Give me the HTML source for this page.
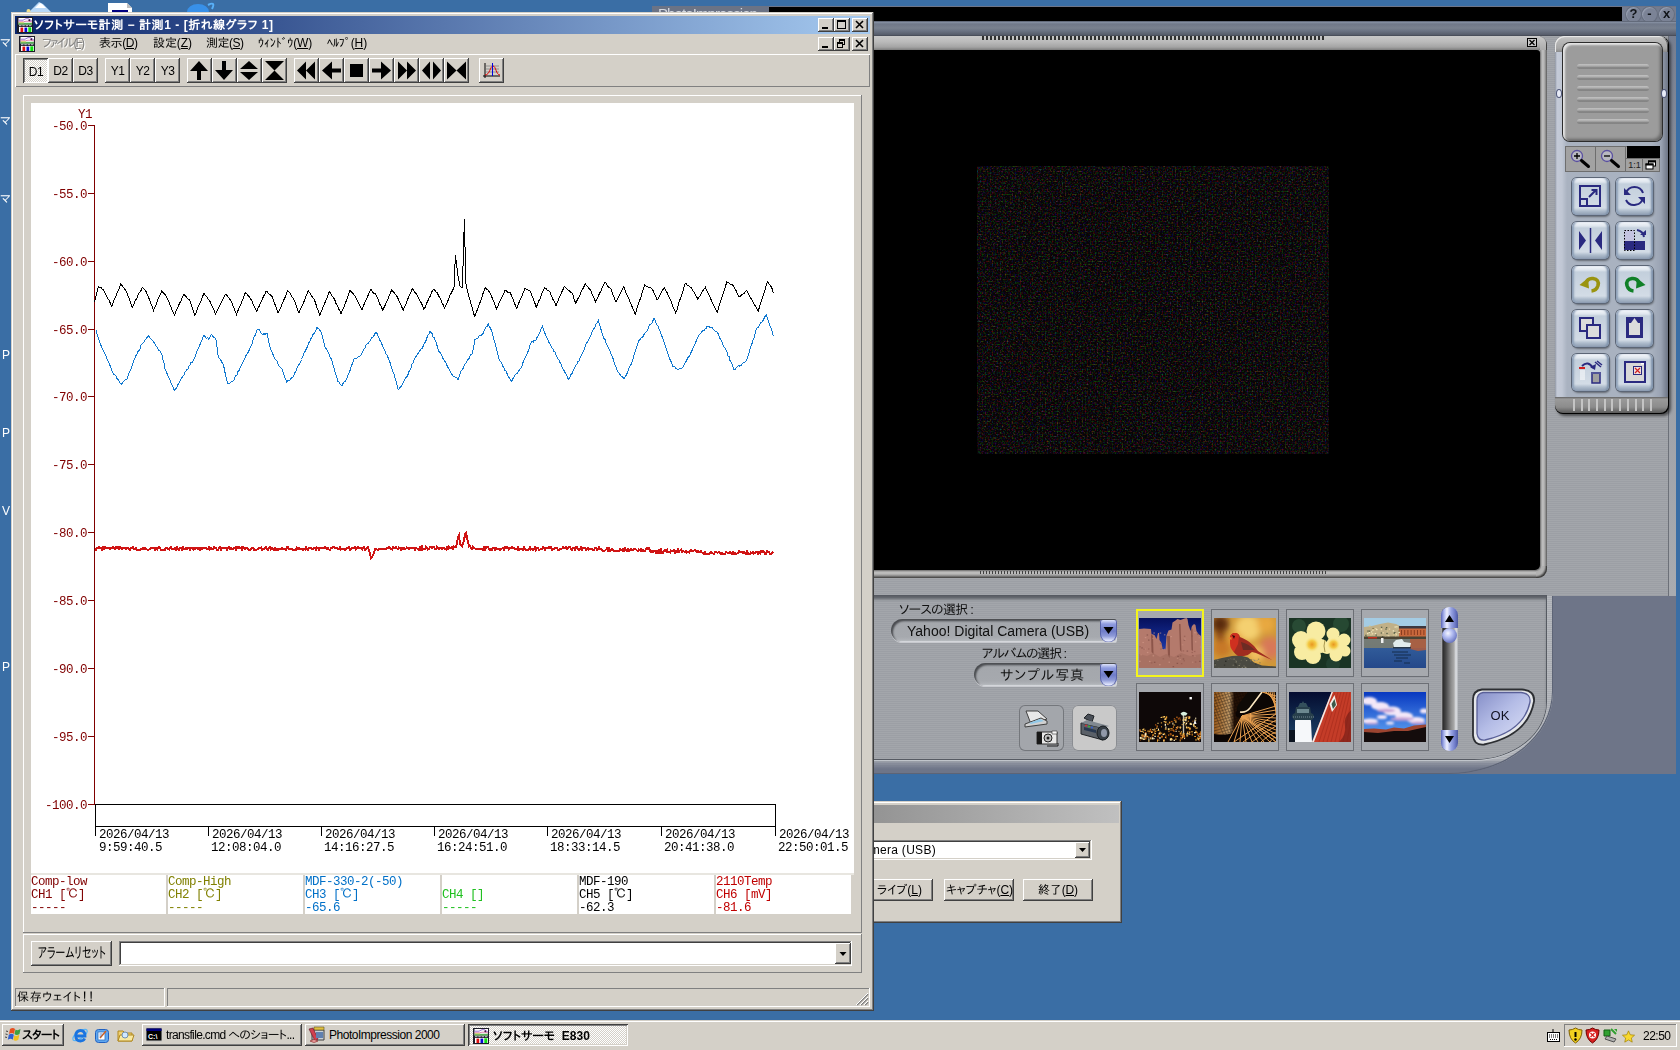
<!DOCTYPE html>
<html lang="ja"><head><meta charset="utf-8"><title>desktop</title>
<style>*{box-sizing:border-box;margin:0;padding:0}
html,body{width:1680px;height:1050px;overflow:hidden}
body{background:#3a6ea5;position:relative;font-family:"Liberation Sans","IPAGothic","Noto Sans CJK JP",sans-serif;font-size:12px;color:#000}
.a{position:absolute}
.ui{font-family:"Liberation Sans","IPAPGothic","IPAGothic","Noto Sans CJK JP",sans-serif;font-size:12px;line-height:14px;white-space:nowrap}
.mono{font-family:"Liberation Mono","IPAGothic",monospace;font-size:12.5px;letter-spacing:-0.5px;line-height:13px;white-space:pre}
.win{background:#d4d0c8;box-shadow:inset -1px -1px #404040,inset 1px 1px #d4d0c8,inset -2px -2px #808080,inset 2px 2px #fff}
.btn{background:#d4d0c8;box-shadow:inset -1px -1px #404040,inset 1px 1px #fff,inset -2px -2px #808080,inset 2px 2px #d4d0c8}
.btnp{background:#d4d0c8;box-shadow:inset -1px -1px #fff,inset 1px 1px #404040,inset -2px -2px #d4d0c8,inset 2px 2px #808080}
.sunk{box-shadow:inset -1px -1px #fff,inset 1px 1px #808080,inset -2px -2px #d4d0c8,inset 2px 2px #404040}
.sunk1{box-shadow:inset -1px -1px #fff,inset 1px 1px #808080}
.rais1{box-shadow:inset -1px -1px #808080,inset 1px 1px #fff}
.tb{background:#d4d0c8;box-shadow:inset -1px -1px #404040,inset 1px 1px #fff,inset -2px -2px #808080;width:25px;height:25px;top:58px}
.tb svg{position:absolute;left:0;top:0}
u{text-decoration:underline}
</style></head>
<body>
<!-- s_desktop -->
<svg class="a" style="left:26px;top:0" width="30" height="12"><path d="M3 12l10-10 4 2 8 8z" fill="#b8d8f8"/><path d="M9 8l5-5 2 1 4 4z" fill="#fff"/><circle cx="2.500" cy="11" r="2" fill="#f0e090"/></svg>
<svg class="a" style="left:106px;top:0" width="30" height="12"><path d="M2 3h19l5 5v4h-24z" fill="#fff"/><path d="M21 3v5h5z" fill="#c0c0c0"/><rect x="6" y="10" width="16" height="2" fill="#000080"/></svg>
<svg class="a" style="left:182px;top:0" width="36" height="12"><ellipse cx="16" cy="12" rx="11" ry="8" fill="#3890e8"/><path d="M26 5q8-4 4 4" stroke="#58b0f8" stroke-width="2" fill="none"/></svg>
<div class="a ui" style="left:0px;top:36px;color:#fff">マ</div>
<div class="a ui" style="left:0px;top:114px;color:#fff">マ</div>
<div class="a ui" style="left:0px;top:192px;color:#fff">マ</div>
<div class="a ui" style="left:2px;top:348px;color:#fff">P</div>
<div class="a ui" style="left:2px;top:426px;color:#fff">P</div>
<div class="a ui" style="left:2px;top:504px;color:#fff">V</div>
<div class="a ui" style="left:2px;top:660px;color:#fff">P</div>
<!-- s_photo -->
<div class="a" style="left:652px;top:6px;width:1024px;height:768px;background:#6e7588"></div>
<div class="a" style="left:652px;top:6px;width:117px;height:15px;background:#6b7385"></div>
<div class="a a" style="left:658px;top:5px;font-size:15px;line-height:17px;color:#d4d8e0;letter-spacing:-0.90px">PhotoImpression</div>
<div class="a" style="left:769px;top:7px;width:853px;height:14px;background:#000"></div>
<div class="a" style="left:1622px;top:7px;width:54px;height:14px;background:#747c8f"></div>
<div class="a" style="left:1625px;top:6px;width:17px;height:17px;border-radius:50%;background:#7b8396;border:1px solid #59607099;box-shadow:inset 1px 1px 1px #99a1b3"></div>
<div class="a" style="left:1625px;top:5px;width:17px;text-align:center;font:bold 13px/17px 'Liberation Sans',sans-serif;color:#101418">?</div>
<div class="a" style="left:1641px;top:6px;width:17px;height:17px;border-radius:50%;background:#7b8396;border:1px solid #59607099;box-shadow:inset 1px 1px 1px #99a1b3"></div>
<div class="a" style="left:1641px;top:5px;width:17px;text-align:center;font:bold 13px/17px 'Liberation Sans',sans-serif;color:#101418">-</div>
<div class="a" style="left:1658px;top:6px;width:17px;height:17px;border-radius:50%;background:#7b8396;border:1px solid #59607099;box-shadow:inset 1px 1px 1px #99a1b3"></div>
<div class="a" style="left:1658px;top:5px;width:17px;text-align:center;font:bold 13px/17px 'Liberation Sans',sans-serif;color:#101418">x</div>
<div class="a" style="left:652px;top:21px;width:1024px;height:15px;background:linear-gradient(180deg,#3c4250 0,#8993a6 1px,#707889 3px,#79818f 7px,#6a7282 10px,#555b69 14px,#3e424c 15px)"></div>
<div class="a" style="left:874px;top:36px;width:794px;height:560px;background:repeating-linear-gradient(180deg,#a3a6ab 0 1px,#9c9fa5 1px 2px)"></div>
<div class="a" style="left:1668px;top:36px;width:8px;height:560px;background:linear-gradient(180deg,#767e90 0,#858c9a 120px,#9da1a8 330px,#a8abb0 560px);box-shadow:inset 1px 0 #6c7078"></div>
<div class="a" style="left:860px;top:36px;width:687px;height:542px;border-radius:9px;background:#b2b2b2;box-shadow:inset -1px -1px 1px #3c3c3c,inset -2px -2px 2px #6e6e6e,inset -5px -5px 2px -3px #c8c8c8"></div>
<div class="a" style="left:860px;top:36px;width:680px;height:14px;background:linear-gradient(180deg,#c8c8c8 0,#bababa 6px,#a4a4a4 11px,#7e7e7e 14px)"></div>
<div class="a" style="left:1540px;top:37px;width:6px;height:13px;border-top-right-radius:8px;background:linear-gradient(180deg,#c8c8c8 0,#bababa 6px,#acacac 13px)"></div>
<div class="a" style="left:1540px;top:50px;width:7px;height:516px;background:linear-gradient(90deg,#8a8a8a 0,#b6b6b6 2px,#c2c2c2 3px,#a2a2a2 5px,#5a5a5a 7px)"></div>
<div class="a" style="left:860px;top:570px;width:676px;height:8px;background:linear-gradient(180deg,#8a8a8a 0,#b6b6b6 2px,#c2c2c2 3px,#a2a2a2 5px,#606060 7px,#3c3c3c 8px)"></div>
<div class="a" style="left:860px;top:50px;width:680px;height:520px;background:#000;border-bottom-right-radius:5px;border-top-right-radius:3px;box-shadow:1px 1px 1px #7a7a7a"></div>
<div class="a" style="left:982px;top:36px;width:344px;height:4px;background:repeating-linear-gradient(90deg,#303030 0 2px,transparent 2px 4px)"></div>
<div class="a" style="left:980px;top:571px;width:346px;height:3px;background:repeating-linear-gradient(90deg,#404040 0 1px,transparent 1px 3px)"></div>
<svg class="a" style="left:1527px;top:38px" width="10" height="9"><rect x=".500" y=".500" width="9" height="8" fill="#c8c8c8" stroke="#000"/><path d="M2.500 2l5 5M7.500 2l-5 5" stroke="#000" stroke-width="1.300"/></svg>
<svg class="a" style="left:977px;top:166px" width="352" height="288"><defs><filter id="nz" x="0" y="0" width="100%" height="100%" color-interpolation-filters="sRGB"><feTurbulence type="fractalNoise" baseFrequency="0.6" numOctaves="1" seed="3"/><feColorMatrix type="matrix" values="1.1 0 0 0 -0.565  0 0.95 0 0 -0.48  0 0 1.0 0 -0.52  0 0 0 0 1"/></filter></defs><rect width="352" height="288" fill="#070406"/><rect width="352" height="288" filter="url(#nz)" style="mix-blend-mode:screen"/></svg>
<div class="a" style="left:1555px;top:36px;width:114px;height:378px;border-radius:9px 9px 8px 8px;background:#000;box-shadow:2px 2px 3px #0008"></div>
<div class="a" style="left:1555px;top:36px;width:113px;height:362px;border-radius:9px 9px 0 0;background:linear-gradient(90deg,#8f96a3 0,#c4cad7 2px,#c0c7d4 7px,#a9b2c0 12px,#a9b2c0 96px,#9aa3b3 106px,#6d7585 113px)"></div>
<div class="a" style="left:1555px;top:36px;width:113px;height:16px;border-radius:9px 9px 0 0;background:linear-gradient(180deg,#d0d0d0 0,#bcbcbc 3px,#a8a8a8 12px,#8a8a8a 16px);box-shadow:inset 1px 1px #e8e8e8,inset -1px 0 #505050"></div>
<div class="a" style="left:1555px;top:397px;width:113px;height:16px;border-radius:0 0 8px 8px;background:linear-gradient(180deg,#606060 0,#9a9a9a 2px,#8c8c8c 10px,#5a5a5a 16px)"></div>
<div class="a" style="left:1573px;top:399px;width:79px;height:12px;background:repeating-linear-gradient(90deg,#c4c4c4 0 2px,transparent 2px 7.700px)"></div>
<div class="a" style="left:1563px;top:43px;width:99px;height:98px;border-radius:7px;background:#9c9c9c;box-shadow:inset 2px 2px 2px #e6e6e6,inset -2px -2px 3px #686868,0 0 0 1px #2c2c2c"></div>
<div class="a" style="left:1577px;top:64px;width:72px;height:5px;border-radius:3px;background:linear-gradient(180deg,#c2c2c2 0,#adadad 2px,#7b7b7b 4px,#8e8e8e 5px)"></div>
<div class="a" style="left:1577px;top:75px;width:72px;height:5px;border-radius:3px;background:linear-gradient(180deg,#c2c2c2 0,#adadad 2px,#7b7b7b 4px,#8e8e8e 5px)"></div>
<div class="a" style="left:1577px;top:86px;width:72px;height:5px;border-radius:3px;background:linear-gradient(180deg,#c2c2c2 0,#adadad 2px,#7b7b7b 4px,#8e8e8e 5px)"></div>
<div class="a" style="left:1577px;top:97px;width:72px;height:5px;border-radius:3px;background:linear-gradient(180deg,#c2c2c2 0,#adadad 2px,#7b7b7b 4px,#8e8e8e 5px)"></div>
<div class="a" style="left:1577px;top:108px;width:72px;height:5px;border-radius:3px;background:linear-gradient(180deg,#c2c2c2 0,#adadad 2px,#7b7b7b 4px,#8e8e8e 5px)"></div>
<div class="a" style="left:1577px;top:119px;width:72px;height:5px;border-radius:3px;background:linear-gradient(180deg,#c2c2c2 0,#adadad 2px,#7b7b7b 4px,#8e8e8e 5px)"></div>
<div class="a" style="left:1557px;top:90px;width:4px;height:7px;border-radius:50%;background:#e8ecf8;box-shadow:0 0 0 1px #50587a"></div>
<div class="a" style="left:1662px;top:90px;width:4px;height:7px;border-radius:50%;background:#e8ecf8;box-shadow:0 0 0 1px #50587a"></div>
<div class="a" style="left:1565px;top:146px;width:95px;height:26px;background:#a2a2a2;box-shadow:inset 0 0 0 1px #6e6e6e"></div>
<div class="a" style="left:1595px;top:146px;width:1px;height:26px;background:#6e6e6e"></div><div class="a" style="left:1625px;top:146px;width:1px;height:26px;background:#6e6e6e"></div>
<div class="a" style="left:1627px;top:146px;width:33px;height:12px;background:#000"></div>
<div class="a" style="left:1626px;top:158px;width:34px;height:1px;background:#6e6e6e"></div><div class="a" style="left:1642px;top:158px;width:1px;height:14px;background:#6e6e6e"></div>
<div class="a" style="left:1627px;top:159px;width:15px;text-align:center;font:9px/12px 'Liberation Sans',sans-serif;color:#202020">1:1</div>
<svg class="a" style="left:1645px;top:160px" width="12" height="10"><rect x="3.500" y="1" width="7" height="5" fill="#fff" stroke="#000"/><rect x="3" y="0.500" width="8" height="2" fill="#000"/><rect x="1" y="4" width="7" height="5" fill="#fff" stroke="#000"/><rect x=".500" y="3.500" width="8" height="2" fill="#000"/></svg>
<svg class="a" style="left:1569px;top:148px" width="24" height="22" viewBox="0 0 24 22"><circle cx="8" cy="8" r="5.500" fill="#b8b8c0" stroke="#5a50a0" stroke-width="1.300"/><path d="M5 8h6M8 5v6" stroke="#000" stroke-width="1.300"/><path d="M12.500 12.500l7 6" stroke="#000" stroke-width="3" stroke-linecap="round"/></svg>
<svg class="a" style="left:1599px;top:148px" width="24" height="22" viewBox="0 0 24 22"><circle cx="8" cy="8" r="5.500" fill="#b8b8c0" stroke="#5a50a0" stroke-width="1.300"/><path d="M5 8h6" stroke="#000" stroke-width="1.300"/><path d="M12.500 12.500l7 6" stroke="#000" stroke-width="3" stroke-linecap="round"/></svg>
<div class="a" style="left:1572px;top:178px;width:37px;height:37px;border-radius:5px;background:linear-gradient(180deg,#f4f7fb 0,#dfe6ee 4px,#c3cfdc 6px,#d3dce6 30px,#aebccc 33px,#8d9cb0 37px);box-shadow:inset 3px 0 2px -1px #8ea0b8,inset -3px 0 2px -1px #7f92ab,0 0 0 1px #5c6676,1px 2px 2px #0006"><svg width="37" height="37" viewBox="0 0 37 37"><rect x="8" y="8" width="20" height="20" fill="none" stroke="#2a2a80" stroke-width="2"/><rect x="8" y="21" width="7" height="7" fill="none" stroke="#2a2a80" stroke-width="2"/><path d="M17 19l7-7M19.500 12h5v5" fill="none" stroke="#2a2a80" stroke-width="2"/></svg></div>
<div class="a" style="left:1616px;top:178px;width:37px;height:37px;border-radius:5px;background:linear-gradient(180deg,#f4f7fb 0,#dfe6ee 4px,#c3cfdc 6px,#d3dce6 30px,#aebccc 33px,#8d9cb0 37px);box-shadow:inset 3px 0 2px -1px #8ea0b8,inset -3px 0 2px -1px #7f92ab,0 0 0 1px #5c6676,1px 2px 2px #0006"><svg width="37" height="37" viewBox="0 0 37 37"><path d="M10 22a9 9 0 0 0 17-3M27 15a9 9 0 0 0-17 0" fill="none" stroke="#2a2a80" stroke-width="2"/><path d="M8 10v7h7zM29 26v-7h-7z" fill="#2a2a80"/></svg></div>
<div class="a" style="left:1572px;top:222px;width:37px;height:37px;border-radius:5px;background:linear-gradient(180deg,#f4f7fb 0,#dfe6ee 4px,#c3cfdc 6px,#d3dce6 30px,#aebccc 33px,#8d9cb0 37px);box-shadow:inset 3px 0 2px -1px #8ea0b8,inset -3px 0 2px -1px #7f92ab,0 0 0 1px #5c6676,1px 2px 2px #0006"><svg width="37" height="37" viewBox="0 0 37 37"><path d="M18.500 6v25" stroke="#2a2a80" stroke-width="1.500"/><path d="M7 9l7 9.500-7 9.500zM30 9l-7 9.500 7 9.500z" fill="#2a2a80"/></svg></div>
<div class="a" style="left:1616px;top:222px;width:37px;height:37px;border-radius:5px;background:linear-gradient(180deg,#f4f7fb 0,#dfe6ee 4px,#c3cfdc 6px,#d3dce6 30px,#aebccc 33px,#8d9cb0 37px);box-shadow:inset 3px 0 2px -1px #8ea0b8,inset -3px 0 2px -1px #7f92ab,0 0 0 1px #5c6676,1px 2px 2px #0006"><svg width="37" height="37" viewBox="0 0 37 37"><rect x="8" y="8" width="10" height="11" fill="#c4c4e0"/><path d="M8 19h21v9h-21z" fill="#2a2a80"/><rect x="8.500" y="8.500" width="10" height="20" fill="none" stroke="#000" stroke-dasharray="1.500 1.500"/><path d="M21 8q6 1 7 7" fill="none" stroke="#2a2a80" stroke-width="2"/><path d="M24 13h6v-5z" fill="#2a2a80"/></svg></div>
<div class="a" style="left:1572px;top:266px;width:37px;height:37px;border-radius:5px;background:linear-gradient(180deg,#f4f7fb 0,#dfe6ee 4px,#c3cfdc 6px,#d3dce6 30px,#aebccc 33px,#8d9cb0 37px);box-shadow:inset 3px 0 2px -1px #8ea0b8,inset -3px 0 2px -1px #7f92ab,0 0 0 1px #5c6676,1px 2px 2px #0006"><svg width="37" height="37" viewBox="0 0 37 37"><path d="M14 17.500Q15 12 21 12.500Q27.500 13.500 26 19.500Q24.500 24.500 19.500 25" fill="none" stroke="#9a9410" stroke-width="3.600"/><path d="M7.500 19l8.500-7 1 10.500z" fill="#9a9410"/></svg></div>
<div class="a" style="left:1616px;top:266px;width:37px;height:37px;border-radius:5px;background:linear-gradient(180deg,#f4f7fb 0,#dfe6ee 4px,#c3cfdc 6px,#d3dce6 30px,#aebccc 33px,#8d9cb0 37px);box-shadow:inset 3px 0 2px -1px #8ea0b8,inset -3px 0 2px -1px #7f92ab,0 0 0 1px #5c6676,1px 2px 2px #0006"><svg width="37" height="37" viewBox="0 0 37 37"><path d="M23 17.500Q22 12 16 12.500Q9.500 13.500 11 19.500Q12.500 24.500 17.500 25" fill="none" stroke="#108028" stroke-width="3.600"/><path d="M29.500 19l-8.500-7-1 10.500z" fill="#108028"/></svg></div>
<div class="a" style="left:1572px;top:310px;width:37px;height:37px;border-radius:5px;background:linear-gradient(180deg,#f4f7fb 0,#dfe6ee 4px,#c3cfdc 6px,#d3dce6 30px,#aebccc 33px,#8d9cb0 37px);box-shadow:inset 3px 0 2px -1px #8ea0b8,inset -3px 0 2px -1px #7f92ab,0 0 0 1px #5c6676,1px 2px 2px #0006"><svg width="37" height="37" viewBox="0 0 37 37"><rect x="8" y="8" width="13" height="13" fill="#dcdcdc" stroke="#2a2a80" stroke-width="2"/><rect x="15" y="15" width="13" height="13" fill="#dcdcdc" stroke="#2a2a80" stroke-width="2"/></svg></div>
<div class="a" style="left:1616px;top:310px;width:37px;height:37px;border-radius:5px;background:linear-gradient(180deg,#f4f7fb 0,#dfe6ee 4px,#c3cfdc 6px,#d3dce6 30px,#aebccc 33px,#8d9cb0 37px);box-shadow:inset 3px 0 2px -1px #8ea0b8,inset -3px 0 2px -1px #7f92ab,0 0 0 1px #5c6676,1px 2px 2px #0006"><svg width="37" height="37" viewBox="0 0 37 37"><rect x="10" y="7" width="17" height="21" fill="#2a2a80"/><path d="M13 13h11v12h-11z" fill="#dcdcdc"/><path d="M15 13l3.500-5 3.500 5z" fill="#dcdcdc"/></svg></div>
<div class="a" style="left:1572px;top:354px;width:37px;height:37px;border-radius:5px;background:linear-gradient(180deg,#f4f7fb 0,#dfe6ee 4px,#c3cfdc 6px,#d3dce6 30px,#aebccc 33px,#8d9cb0 37px);box-shadow:inset 3px 0 2px -1px #8ea0b8,inset -3px 0 2px -1px #7f92ab,0 0 0 1px #5c6676,1px 2px 2px #0006"><svg width="37" height="37" viewBox="0 0 37 37"><path d="M10 12q6-6 11 2" fill="none" stroke="#2a2a80" stroke-width="2"/><path d="M18 13l5 3 1-6z" fill="#2a2a80"/><path d="M7 14h6" stroke="#d02020" stroke-width="2"/><path d="M8 17h5M8 19h5M8 21h5M8 23h5M8 25h5" stroke="#fff" stroke-width="1"/><path d="M19 19h10M20 20v9h8v-9" fill="#a0a0a0" stroke="#2a2a80" stroke-width="1.500"/><path d="M23 8l6 5M25 7l5 4" stroke="#2a2a80" stroke-width="1.500"/></svg></div>
<div class="a" style="left:1616px;top:354px;width:37px;height:37px;border-radius:5px;background:linear-gradient(180deg,#f4f7fb 0,#dfe6ee 4px,#c3cfdc 6px,#d3dce6 30px,#aebccc 33px,#8d9cb0 37px);box-shadow:inset 3px 0 2px -1px #8ea0b8,inset -3px 0 2px -1px #7f92ab,0 0 0 1px #5c6676,1px 2px 2px #0006"><svg width="37" height="37" viewBox="0 0 37 37"><rect x="9" y="8" width="20" height="20" fill="#d8d8d8" stroke="#2a2a80" stroke-width="2"/><rect x="17.500" y="12.500" width="8" height="8" fill="#f0e0e0" stroke="#2a2a80"/><path d="M19 14l5 5M24 14l-5 5" stroke="#d02020" stroke-width="1.200"/><rect x="25" y="9" width="3" height="1.500" fill="#fff"/></svg></div>
<div class="a" style="left:860px;top:596px;width:693px;height:178px;border-bottom-right-radius:104px 82px;background:linear-gradient(180deg,rgba(110,117,136,0) 0,rgba(110,117,136,0) 163px,rgba(110,117,136,.55) 167px,#6e7588 173px),repeating-linear-gradient(180deg,#b6b9be 0 1px,#aaadb3 1px 2px);box-shadow:inset -1px -1px 0 #5d6476"></div>
<div class="a" style="left:860px;top:596px;width:686px;height:163px;border-bottom-right-radius:72px 57px;background:repeating-linear-gradient(180deg,#a3a6ab 0 1px,#9c9fa5 1px 2px);box-shadow:inset 0 4px 3px -1px #5c5f66,0 0 0 1px #565a62,0 1px 1px 1px #c4c8ce"></div>
<div class="a ui" style="left:899px;top:603px;font-size:13px;color:#101010;letter-spacing:-0.74px">ソースの選択 :</div>
<div class="a" style="left:891px;top:619px;width:226px;height:23px;border-radius:12px 3px 3px 12px;background:linear-gradient(180deg,#8a8d92 0,#a4a7ac 4px,#a6a9ae 18px,#b6b9be 23px);box-shadow:inset 2px 2px 2px #4a4c50,inset -1px -1px 1px #d8dade,0 1px 0 #c8cacf"></div><div class="a" style="left:1100px;top:620px;width:17px;height:22px;border-radius:2px 2px 8px 8px;background:linear-gradient(180deg,#dfe4fa 0,#8f9ce0 4px,#6f7cc8 11px,#8e9ad8 16px,#e8ecff 21px,#9aa4d8 22px);box-shadow:inset 1px 0 #5a64a8,inset -1px 0 #5a64a8"><svg width="17" height="22"><path d="M3.500 7h10l-5 7z" fill="#000"/></svg></div>
<div class="a ui" style="left:907px;top:623px;font-size:14px;line-height:16px;color:#101010;letter-spacing:0.01px">Yahoo! Digital Camera (USB)</div>
<div class="a ui" style="left:982px;top:647px;font-size:13px;color:#101010;letter-spacing:-1.18px">アルバムの選択 :</div>
<div class="a" style="left:974px;top:663px;width:143px;height:23px;border-radius:12px 3px 3px 12px;background:linear-gradient(180deg,#8a8d92 0,#a4a7ac 4px,#a6a9ae 18px,#b6b9be 23px);box-shadow:inset 2px 2px 2px #4a4c50,inset -1px -1px 1px #d8dade,0 1px 0 #c8cacf"></div><div class="a" style="left:1100px;top:664px;width:17px;height:22px;border-radius:2px 2px 8px 8px;background:linear-gradient(180deg,#dfe4fa 0,#8f9ce0 4px,#6f7cc8 11px,#8e9ad8 16px,#e8ecff 21px,#9aa4d8 22px);box-shadow:inset 1px 0 #5a64a8,inset -1px 0 #5a64a8"><svg width="17" height="22"><path d="M3.500 7h10l-5 7z" fill="#000"/></svg></div>
<div class="a ui" style="left:1000px;top:667px;font-size:14px;line-height:16px;color:#101010;letter-spacing:0.78px">サンプル写真</div>
<div class="a" style="left:1019px;top:705px;width:45px;height:46px;border-radius:6px;background:#a3a6ab;box-shadow:inset 0 0 0 1px #74777c"><svg width="45" height="46" viewBox="0 0 45 46"><path d="M7 6h12l9 8-16 5z" fill="#e8e8e8" stroke="#404040"/><path d="M6 19l16-6 6 3v3l-22 3z" fill="#d0d0d0" stroke="#404040"/><path d="M10 18l11-4 4 2-13 3z" fill="#90c8e8"/><path d="M18 27h20v12h-20z" fill="#e8e8e8" stroke="#303030"/><path d="M18 27h5v12h-5z" fill="#181818"/><circle cx="29" cy="33" r="4" fill="#c0c0c0" stroke="#202020"/><circle cx="29" cy="33" r="1.500" fill="#202020"/><path d="M33 26h5v3h-5z" fill="#f8f8f8" stroke="#303030" stroke-width=".6"/><path d="M28 41h11v-3" fill="none" stroke="#202020"/></svg></div>
<div class="a" style="left:1072px;top:705px;width:45px;height:46px;border-radius:6px;background:#c9c9c9;box-shadow:inset 0 0 0 1px #8a8d92"><svg width="45" height="46" viewBox="0 0 45 46"><path d="M12 13l4-4 6 2-2 6z" fill="#4a5058" stroke="#202428"/><path d="M9 18l22 5v12l-22-6z" fill="#5a6068" stroke="#202428"/><path d="M9 18l6-3 22 6-6 2z" fill="#808890"/><path d="M12 22l12 3v3l-12-3z" fill="#283850"/><ellipse cx="31" cy="28" rx="6" ry="7" fill="#384048" stroke="#181c20"/><ellipse cx="32" cy="28" rx="3" ry="4" fill="#9098a8"/><circle cx="14" cy="20.500" r=".9" fill="#e03030"/><circle cx="17" cy="21.500" r=".9" fill="#30c030"/><circle cx="20" cy="22.500" r=".9" fill="#3060e0"/></svg></div>
<div class="a" style="left:1136px;top:609px;width:68px;height:68px;background:#a6a9ae;box-shadow:inset 0 0 0 2px #f4f41c"></div>
<div class="a" style="left:1139px;top:618px;width:62px;height:50px"><svg width="62" height="50" viewBox="0 0 62 50"><defs><linearGradient id="t0" x1="0" y1="0" x2="0" y2="1"><stop offset="0" stop-color="#06105c"/><stop offset=".7" stop-color="#1c3cb0"/></linearGradient></defs><rect width="62" height="50" fill="url(#t0)"/><path d="M0 50V11l5-.500 7 .500.500 5 3 1 2 4 1.500-6 1 0 .500 7 2 3 1 6 3 .500 1-14 2-5 3-1 1-7 3-2 2-1.500 3 1 4-1.500 2-.500 1 1 1 6 2 6 1.500-5 2-2 1.500 1 1 6 2 3 2.500 2V50z" fill="#b47a6c"/><path d="M12 16l.500 18 2 2-.500-18zM28 18l1 20 2 2 0-22zM40 6l1 26 1.500 2-1-28zM52 10l.500 22 1.500 1-.500-22z" fill="#7a463c" opacity=".7"/><path d="M0 50V36l8 2 6-3 7 4 6-3 8 3 7-4 9 3 11-2v14z" fill="#a06a5e" opacity=".6"/><rect x="9.0" y="30.4" width="1.500" height="1.200" fill="#8a5448" opacity=".55"/><rect x="43.7" y="40.4" width="1.500" height="1.200" fill="#70403a" opacity=".55"/><rect x="31.4" y="18.0" width="1.500" height="1.200" fill="#d8a090" opacity=".55"/><rect x="5.0" y="30.4" width="1.500" height="1.200" fill="#d8a090" opacity=".55"/><rect x="40.8" y="37.3" width="1.500" height="1.200" fill="#8a5448" opacity=".55"/><rect x="20.8" y="25.1" width="1.500" height="1.200" fill="#8a5448" opacity=".55"/><rect x="59.6" y="19.1" width="1.500" height="1.200" fill="#c89080" opacity=".55"/><rect x="22.9" y="28.7" width="1.500" height="1.200" fill="#8a5448" opacity=".55"/><rect x="25.0" y="30.6" width="1.500" height="1.200" fill="#c89080" opacity=".55"/><rect x="55.9" y="43.4" width="1.500" height="1.200" fill="#8a5448" opacity=".55"/><rect x="53.1" y="37.0" width="1.500" height="1.200" fill="#8a5448" opacity=".55"/><rect x="0.3" y="28.2" width="1.500" height="1.200" fill="#8a5448" opacity=".55"/><rect x="11.9" y="44.3" width="1.500" height="1.200" fill="#8a5448" opacity=".55"/><rect x="60.1" y="42.8" width="1.500" height="1.200" fill="#70403a" opacity=".55"/><rect x="7.9" y="33.9" width="1.500" height="1.200" fill="#d8a090" opacity=".55"/><rect x="37.8" y="39.8" width="1.500" height="1.200" fill="#c89080" opacity=".55"/><rect x="42.8" y="26.2" width="1.500" height="1.200" fill="#c89080" opacity=".55"/><rect x="33.6" y="48.0" width="1.500" height="1.200" fill="#70403a" opacity=".55"/><rect x="24.9" y="16.2" width="1.500" height="1.200" fill="#d8a090" opacity=".55"/><rect x="55.2" y="37.5" width="1.500" height="1.200" fill="#c89080" opacity=".55"/><rect x="14.9" y="43.7" width="1.500" height="1.200" fill="#70403a" opacity=".55"/><rect x="47.6" y="32.5" width="1.500" height="1.200" fill="#70403a" opacity=".55"/><rect x="55.9" y="23.2" width="1.500" height="1.200" fill="#d8a090" opacity=".55"/><rect x="41.9" y="45.0" width="1.500" height="1.200" fill="#8a5448" opacity=".55"/><rect x="3.4" y="23.9" width="1.500" height="1.200" fill="#d8a090" opacity=".55"/><rect x="44.5" y="42.2" width="1.500" height="1.200" fill="#8a5448" opacity=".55"/><rect x="54.9" y="32.9" width="1.500" height="1.200" fill="#8a5448" opacity=".55"/><rect x="40.4" y="41.0" width="1.500" height="1.200" fill="#c89080" opacity=".55"/><rect x="20.7" y="14.5" width="1.500" height="1.200" fill="#d8a090" opacity=".55"/><rect x="29.5" y="43.6" width="1.500" height="1.200" fill="#d8a090" opacity=".55"/><rect x="44.6" y="21.5" width="1.500" height="1.200" fill="#70403a" opacity=".55"/><rect x="44.9" y="17.7" width="1.500" height="1.200" fill="#8a5448" opacity=".55"/><rect x="38.3" y="37.8" width="1.500" height="1.200" fill="#70403a" opacity=".55"/><rect x="58.0" y="15.4" width="1.500" height="1.200" fill="#70403a" opacity=".55"/><rect x="10.0" y="42.8" width="1.500" height="1.200" fill="#d8a090" opacity=".55"/><rect x="61.7" y="47.6" width="1.500" height="1.200" fill="#8a5448" opacity=".55"/><rect x="5.8" y="19.0" width="1.500" height="1.200" fill="#d8a090" opacity=".55"/><rect x="7.6" y="16.4" width="1.500" height="1.200" fill="#70403a" opacity=".55"/><rect x="2.3" y="29.3" width="1.500" height="1.200" fill="#70403a" opacity=".55"/><rect x="21.3" y="30.4" width="1.500" height="1.200" fill="#8a5448" opacity=".55"/><rect x="37.6" y="44.8" width="1.500" height="1.200" fill="#70403a" opacity=".55"/><rect x="9.0" y="21.5" width="1.500" height="1.200" fill="#70403a" opacity=".55"/><rect x="4.8" y="50.0" width="1.500" height="1.200" fill="#c89080" opacity=".55"/><rect x="60.8" y="28.4" width="1.500" height="1.200" fill="#c89080" opacity=".55"/><rect x="52.2" y="17.4" width="1.500" height="1.200" fill="#8a5448" opacity=".55"/><rect x="61.9" y="28.1" width="1.500" height="1.200" fill="#c89080" opacity=".55"/><rect x="0.2" y="42.7" width="1.500" height="1.200" fill="#d8a090" opacity=".55"/><rect x="58.1" y="49.7" width="1.500" height="1.200" fill="#c89080" opacity=".55"/><rect x="14.4" y="14.4" width="1.500" height="1.200" fill="#d8a090" opacity=".55"/><rect x="13.6" y="37.2" width="1.500" height="1.200" fill="#d8a090" opacity=".55"/><rect x="52.9" y="43.6" width="1.500" height="1.200" fill="#c89080" opacity=".55"/><rect x="20.1" y="46.1" width="1.500" height="1.200" fill="#d8a090" opacity=".55"/><rect x="45.1" y="20.6" width="1.500" height="1.200" fill="#d8a090" opacity=".55"/><rect x="1.4" y="36.2" width="1.500" height="1.200" fill="#c89080" opacity=".55"/><rect x="52.5" y="33.9" width="1.500" height="1.200" fill="#8a5448" opacity=".55"/><rect x="55.2" y="14.1" width="1.500" height="1.200" fill="#d8a090" opacity=".55"/><rect x="43.6" y="32.3" width="1.500" height="1.200" fill="#8a5448" opacity=".55"/><rect x="23.6" y="40.2" width="1.500" height="1.200" fill="#8a5448" opacity=".55"/><rect x="13.2" y="19.8" width="1.500" height="1.200" fill="#c89080" opacity=".55"/><rect x="4.5" y="30.5" width="1.500" height="1.200" fill="#8a5448" opacity=".55"/></svg></div>
<div class="a" style="left:1211px;top:609px;width:68px;height:68px;background:#a6a9ae;box-shadow:inset 0 0 0 1px #6c6f75"></div>
<div class="a" style="left:1214px;top:618px;width:62px;height:50px"><svg width="62" height="50" viewBox="0 0 62 50"><defs><filter id="b1" x="-.2" y="-.2" width="1.400" height="1.400"><feGaussianBlur stdDeviation="3"/></filter></defs><rect width="62" height="50" fill="#d09838"/><g filter="url(#b1)"><circle cx="6" cy="6" r="9" fill="#5a2c10"/><circle cx="34" cy="10" r="13" fill="#f4d070"/><circle cx="52" cy="6" r="9" fill="#e8a840"/><circle cx="56" cy="30" r="11" fill="#d87858"/><circle cx="8" cy="30" r="9" fill="#c87828"/><circle cx="42" cy="36" r="8" fill="#f0c060"/><circle cx="22" cy="22" r="7" fill="#e8a038"/><circle cx="6" cy="18" r="5" fill="#8a4818"/></g><path d="M0 50v-8l8-2 10-2 8-.500 8 2 6 5 8 3 14 1v1.500z" fill="#4a4a42"/><rect x="26.7" y="41.9" width="1.300" height="1" fill="#6a6858" opacity=".7"/><rect x="21.5" y="46.6" width="1.300" height="1" fill="#24241c" opacity=".7"/><rect x="27.7" y="49.2" width="1.300" height="1" fill="#a09a80" opacity=".7"/><rect x="31.9" y="42.1" width="1.300" height="1" fill="#a09a80" opacity=".7"/><rect x="3.2" y="41.9" width="1.300" height="1" fill="#8a8670" opacity=".7"/><rect x="20.5" y="45.4" width="1.300" height="1" fill="#24241c" opacity=".7"/><rect x="21.7" y="43.3" width="1.300" height="1" fill="#a09a80" opacity=".7"/><rect x="19.4" y="40.6" width="1.300" height="1" fill="#a09a80" opacity=".7"/><rect x="14.0" y="41.1" width="1.300" height="1" fill="#6a6858" opacity=".7"/><rect x="30.6" y="48.8" width="1.300" height="1" fill="#a09a80" opacity=".7"/><rect x="36.0" y="42.3" width="1.300" height="1" fill="#8a8670" opacity=".7"/><rect x="18.6" y="46.7" width="1.300" height="1" fill="#8a8670" opacity=".7"/><rect x="40.1" y="42.2" width="1.300" height="1" fill="#8a8670" opacity=".7"/><rect x="15.9" y="40.2" width="1.300" height="1" fill="#6a6858" opacity=".7"/><rect x="0.4" y="45.6" width="1.300" height="1" fill="#24241c" opacity=".7"/><rect x="45.3" y="44.3" width="1.300" height="1" fill="#6a6858" opacity=".7"/><rect x="3.0" y="41.5" width="1.300" height="1" fill="#6a6858" opacity=".7"/><rect x="41.2" y="45.7" width="1.300" height="1" fill="#24241c" opacity=".7"/><rect x="22.9" y="48.8" width="1.300" height="1" fill="#6a6858" opacity=".7"/><rect x="39.9" y="41.8" width="1.300" height="1" fill="#8a8670" opacity=".7"/><rect x="43.9" y="40.7" width="1.300" height="1" fill="#6a6858" opacity=".7"/><rect x="24.6" y="47.0" width="1.300" height="1" fill="#a09a80" opacity=".7"/><rect x="38.6" y="41.2" width="1.300" height="1" fill="#a09a80" opacity=".7"/><rect x="36.4" y="41.4" width="1.300" height="1" fill="#24241c" opacity=".7"/><rect x="42.5" y="42.0" width="1.300" height="1" fill="#a09a80" opacity=".7"/><rect x="44.9" y="49.7" width="1.300" height="1" fill="#8a8670" opacity=".7"/><rect x="44.0" y="48.8" width="1.300" height="1" fill="#6a6858" opacity=".7"/><rect x="17.3" y="40.6" width="1.300" height="1" fill="#6a6858" opacity=".7"/><rect x="21.3" y="41.9" width="1.300" height="1" fill="#6a6858" opacity=".7"/><rect x="4.2" y="49.4" width="1.300" height="1" fill="#6a6858" opacity=".7"/><rect x="21.4" y="44.2" width="1.300" height="1" fill="#6a6858" opacity=".7"/><rect x="11.2" y="42.8" width="1.300" height="1" fill="#24241c" opacity=".7"/><rect x="0.6" y="46.3" width="1.300" height="1" fill="#a09a80" opacity=".7"/><rect x="30.2" y="40.4" width="1.300" height="1" fill="#6a6858" opacity=".7"/><rect x="11.0" y="42.7" width="1.300" height="1" fill="#24241c" opacity=".7"/><rect x="25.4" y="45.4" width="1.300" height="1" fill="#6a6858" opacity=".7"/><rect x="0.9" y="41.3" width="1.300" height="1" fill="#6a6858" opacity=".7"/><rect x="31.2" y="48.9" width="1.300" height="1" fill="#a09a80" opacity=".7"/><rect x="29.4" y="47.5" width="1.300" height="1" fill="#8a8670" opacity=".7"/><rect x="9.9" y="46.6" width="1.300" height="1" fill="#24241c" opacity=".7"/><path d="M16 19q1-4 5-4q4 0 5 4q8 3 14 9l4 5 14 9-16-7-4-1q-3 3-8 4l-6 0q-6-4-6-10q0-3 0-6z" fill="#a02c20"/><path d="M16 19q1-4 5-4q3 0 4 3l-1 8-4 8q-4-3-4-9z" fill="#d03020"/><path d="M14 20l3.500-1v3z" fill="#e88030"/><path d="M18 17l3 1-1 3z" fill="#300808"/><path d="M27 24q8 2 14 8l-12 0z" fill="#6c2c24"/></svg></div>
<div class="a" style="left:1286px;top:609px;width:68px;height:68px;background:#a6a9ae;box-shadow:inset 0 0 0 1px #6c6f75"></div>
<div class="a" style="left:1289px;top:618px;width:62px;height:50px"><svg width="62" height="50" viewBox="0 0 62 50"><defs><radialGradient id="t2"><stop offset="0" stop-color="#e89820"/><stop offset=".5" stop-color="#f4cc48"/><stop offset="1" stop-color="#f8eca0" stop-opacity="0"/></radialGradient></defs><rect width="62" height="50" fill="#1a3424"/><circle cx="10" cy="8" r="7" fill="#284a34"/><circle cx="52" cy="6" r="8" fill="#264832"/><circle cx="44" cy="46" r="7" fill="#224030"/><g fill="#f8eca2"><circle cx="23" cy="26" r="11"/><circle cx="12" cy="22" r="9"/><circle cx="27" cy="13" r="9.500"/><circle cx="13" cy="34" r="8"/><circle cx="24" cy="38" r="8"/><circle cx="32" cy="28" r="7"/><circle cx="46" cy="27" r="9"/><circle cx="44" cy="16" r="6.500"/><circle cx="55" cy="22" r="6.500"/><circle cx="56" cy="33" r="5.500"/><circle cx="47" cy="37" r="6.500"/><circle cx="38" cy="30" r="6"/></g><circle cx="23" cy="26.500" r="8" fill="url(#t2)"/><circle cx="44.500" cy="26.500" r="7" fill="url(#t2)"/><path d="M36 22q-2 6 0 12" stroke="#a89850" stroke-width="1" fill="none"/></svg></div>
<div class="a" style="left:1361px;top:609px;width:68px;height:68px;background:#a6a9ae;box-shadow:inset 0 0 0 1px #6c6f75"></div>
<div class="a" style="left:1364px;top:618px;width:62px;height:50px"><svg width="62" height="50" viewBox="0 0 62 50"><defs><linearGradient id="t3" x1="0" y1="0" x2="0" y2="1"><stop offset="0" stop-color="#4478b0"/><stop offset="1" stop-color="#24488a"/></linearGradient></defs><rect width="62" height="50" fill="url(#t3)"/><rect width="62" height="10" fill="#a4cce4"/><path d="M0 19V9l8-1 8-2 8-1.500 8 1.500 6 3h-3v10z" fill="#c0b088"/><path d="M35 8.500h27v11h-27z" fill="#c8683c"/><path d="M35 8h27v2.500h-27z" fill="#3c3840"/><rect x="34.3" y="12.5" width="1.400" height="1.200" fill="#807040"/><rect x="24.1" y="17.9" width="1.400" height="1.200" fill="#f0e8c0"/><rect x="22.9" y="12.5" width="1.400" height="1.200" fill="#d8c890"/><rect x="30.5" y="8.4" width="1.400" height="1.200" fill="#f0e8c0"/><rect x="4.6" y="14.0" width="1.400" height="1.200" fill="#f0e8c0"/><rect x="1.5" y="18.5" width="1.400" height="1.200" fill="#807040"/><rect x="21.3" y="10.5" width="1.400" height="1.200" fill="#586048"/><rect x="30.1" y="14.0" width="1.400" height="1.200" fill="#586048"/><rect x="7.9" y="14.9" width="1.400" height="1.200" fill="#e8d8a8"/><rect x="8.7" y="11.4" width="1.400" height="1.200" fill="#e8d8a8"/><rect x="7.6" y="15.3" width="1.400" height="1.200" fill="#e8d8a8"/><rect x="16.6" y="10.0" width="1.400" height="1.200" fill="#d8c890"/><rect x="31.7" y="16.1" width="1.400" height="1.200" fill="#e8d8a8"/><rect x="31.0" y="17.7" width="1.400" height="1.200" fill="#e8d8a8"/><rect x="6.8" y="13.3" width="1.400" height="1.200" fill="#f0e8c0"/><rect x="16.9" y="8.7" width="1.400" height="1.200" fill="#586048"/><rect x="17.9" y="18.0" width="1.400" height="1.200" fill="#586048"/><rect x="32.2" y="8.2" width="1.400" height="1.200" fill="#f0e8c0"/><rect x="10.7" y="15.0" width="1.400" height="1.200" fill="#f0e8c0"/><rect x="34.5" y="13.8" width="1.400" height="1.200" fill="#f0e8c0"/><rect x="24.8" y="10.5" width="1.400" height="1.200" fill="#e8d8a8"/><rect x="16.7" y="14.4" width="1.400" height="1.200" fill="#586048"/><rect x="28.7" y="12.3" width="1.400" height="1.200" fill="#f0e8c0"/><rect x="6.2" y="16.3" width="1.400" height="1.200" fill="#d8c890"/><rect x="22.6" y="17.5" width="1.400" height="1.200" fill="#e8d8a8"/><rect x="8.4" y="9.9" width="1.400" height="1.200" fill="#807040"/><rect x="8.0" y="11.6" width="1.400" height="1.200" fill="#e8d8a8"/><rect x="3.0" y="15.0" width="1.400" height="1.200" fill="#f0e8c0"/><rect x="16.7" y="11.0" width="1.400" height="1.200" fill="#e8d8a8"/><rect x="5.1" y="7.4" width="1.400" height="1.200" fill="#d8c890"/><rect x="24.0" y="17.2" width="1.400" height="1.200" fill="#e8d8a8"/><rect x="3.3" y="12.5" width="1.400" height="1.200" fill="#586048"/><rect x="32.2" y="9.2" width="1.400" height="1.200" fill="#d8c890"/><rect x="18.5" y="14.2" width="1.400" height="1.200" fill="#e8d8a8"/><rect x="22.3" y="14.9" width="1.400" height="1.200" fill="#586048"/><rect x="12.1" y="11.0" width="1.400" height="1.200" fill="#f0e8c0"/><rect x="29.6" y="14.5" width="1.400" height="1.200" fill="#586048"/><rect x="21.9" y="9.0" width="1.400" height="1.200" fill="#586048"/><rect x="28.9" y="16.3" width="1.400" height="1.200" fill="#d8c890"/><rect x="20.9" y="18.0" width="1.400" height="1.200" fill="#e8d8a8"/><rect x="11.2" y="10.0" width="1.400" height="1.200" fill="#e8d8a8"/><rect x="1.2" y="16.7" width="1.400" height="1.200" fill="#586048"/><rect x="11.5" y="16.5" width="1.400" height="1.200" fill="#586048"/><rect x="4.9" y="12.5" width="1.400" height="1.200" fill="#586048"/><rect x="31.3" y="15.2" width="1.400" height="1.200" fill="#e8d8a8"/><rect x="37.0" y="12" width="1" height="5" fill="#8a3c20"/><rect x="40.2" y="12" width="1" height="5" fill="#8a3c20"/><rect x="43.4" y="12" width="1" height="5" fill="#8a3c20"/><rect x="46.6" y="12" width="1" height="5" fill="#8a3c20"/><rect x="49.8" y="12" width="1" height="5" fill="#8a3c20"/><rect x="53.0" y="12" width="1" height="5" fill="#8a3c20"/><rect x="56.2" y="12" width="1" height="5" fill="#8a3c20"/><rect x="59.4" y="12" width="1" height="5" fill="#8a3c20"/><rect y="18.500" width="62" height="2.500" fill="#4a4434"/><rect x="4" y="19" width="9" height="1.500" fill="#c03020"/><rect y="21" width="62" height="9" fill="#8a8468" opacity=".75"/><path d="M46 21h16v11l-8 1-8-2z" fill="#b05c3c" opacity=".85"/><path d="M29 25l3-3 6-1 2 3 7 1-1 4h-16z" fill="#e0ecec"/><path d="M29 29h18v1.500h-18z" fill="#283848"/><rect x="17" y="20" width="2.500" height="5" fill="#f0f0f0"/><path d="M28 34h16M30 37h17M32 40h12M30 43h8M40 45h6" stroke="#142c4c" stroke-width="1.200"/></svg></div>
<div class="a" style="left:1136px;top:683px;width:68px;height:68px;background:#a6a9ae;box-shadow:inset 0 0 0 1px #6c6f75"></div>
<div class="a" style="left:1139px;top:692px;width:62px;height:50px"><svg width="62" height="50" viewBox="0 0 62 50"><rect width="62" height="50" fill="#0e0808"/><rect x="50.500" y="5" width="2.400" height="2.400" fill="#fff"/><path d="M44.500 44V22" stroke="#c8c0a8" stroke-width="1.400"/><path d="M41.500 21.500q3-3.500 7 0l-1.500 2h-4z" fill="#d8f0e0"/><path d="M56 27l1.500 5h-3z" fill="#f0f0f0"/><rect x="59.5" y="46.5" width="1.0" height="1.3" fill="#c06818"/><rect x="0.4" y="37.5" width="1.0" height="1.0" fill="#f8d070"/><rect x="7.3" y="43.9" width="1.8" height="1.0" fill="#f8d070"/><rect x="36.1" y="37.0" width="1.8" height="1.0" fill="#a85010"/><rect x="18.5" y="30.7" width="1.0" height="1.3" fill="#f8d070"/><rect x="53.4" y="28.7" width="1.0" height="1.0" fill="#c06818"/><rect x="34.8" y="27.7" width="1.8" height="1.0" fill="#e89828"/><rect x="2.5" y="44.0" width="1.8" height="1.3" fill="#a85010"/><rect x="8.2" y="38.6" width="1.8" height="1.0" fill="#e89828"/><rect x="33.4" y="30.6" width="1.0" height="2.0" fill="#fff0c0"/><rect x="5.2" y="37.8" width="1.8" height="1.0" fill="#e89828"/><rect x="4.5" y="43.5" width="1.8" height="2.0" fill="#fff0c0"/><rect x="33.1" y="43.0" width="1.8" height="1.0" fill="#a85010"/><rect x="52.1" y="39.3" width="1.8" height="1.0" fill="#f0b040"/><rect x="48.7" y="28.7" width="1.3" height="1.0" fill="#e89828"/><rect x="11.9" y="38.9" width="1.8" height="2.0" fill="#c06818"/><rect x="6.3" y="45.6" width="1.0" height="2.0" fill="#e89828"/><rect x="25.9" y="44.8" width="1.3" height="1.3" fill="#f0b040"/><rect x="11.0" y="37.0" width="1.0" height="1.0" fill="#f0b040"/><rect x="49.5" y="24.3" width="1.8" height="2.0" fill="#f8d070"/><rect x="31.5" y="46.5" width="1.8" height="1.3" fill="#e89828"/><rect x="4.4" y="46.6" width="1.3" height="1.0" fill="#f0b040"/><rect x="4.4" y="36.4" width="1.0" height="1.3" fill="#f0b040"/><rect x="48.0" y="41.0" width="1.8" height="1.0" fill="#f0b040"/><rect x="22.1" y="44.0" width="1.3" height="1.0" fill="#f8d070"/><rect x="34.8" y="26.1" width="1.3" height="1.0" fill="#a85010"/><rect x="11.0" y="38.0" width="1.3" height="2.0" fill="#a85010"/><rect x="3.8" y="39.7" width="1.3" height="1.0" fill="#f8d070"/><rect x="49.6" y="38.8" width="1.8" height="1.0" fill="#c06818"/><rect x="5.9" y="39.9" width="1.3" height="1.3" fill="#a85010"/><rect x="60.3" y="44.1" width="1.8" height="2.0" fill="#f8d070"/><rect x="9.4" y="40.5" width="1.3" height="1.0" fill="#a85010"/><rect x="57.7" y="35.5" width="1.0" height="1.0" fill="#f8d070"/><rect x="53.9" y="31.8" width="1.3" height="2.0" fill="#f8d070"/><rect x="8.8" y="44.8" width="1.3" height="1.0" fill="#f8d070"/><rect x="44.4" y="30.0" width="1.8" height="1.3" fill="#f8d070"/><rect x="13.0" y="42.7" width="1.0" height="1.0" fill="#a85010"/><rect x="18.3" y="43.8" width="1.0" height="1.3" fill="#e89828"/><rect x="37.8" y="34.4" width="1.8" height="1.0" fill="#a85010"/><rect x="40.3" y="25.2" width="1.0" height="2.0" fill="#a85010"/><rect x="20.0" y="45.3" width="1.8" height="1.3" fill="#fff0c0"/><rect x="43.5" y="41.5" width="1.8" height="2.0" fill="#f0b040"/><rect x="50.6" y="30.8" width="1.8" height="2.0" fill="#f8d070"/><rect x="24.1" y="47.2" width="1.8" height="2.0" fill="#a85010"/><rect x="44.2" y="41.2" width="1.3" height="1.0" fill="#f0b040"/><rect x="31.6" y="47.0" width="1.0" height="1.3" fill="#e89828"/><rect x="30.8" y="46.6" width="1.8" height="2.0" fill="#fff0c0"/><rect x="36.3" y="43.8" width="1.8" height="1.0" fill="#c06818"/><rect x="22.0" y="34.3" width="1.0" height="1.0" fill="#e89828"/><rect x="27.9" y="31.6" width="1.8" height="1.0" fill="#e89828"/><rect x="17.6" y="33.2" width="1.0" height="2.0" fill="#c06818"/><rect x="43.2" y="27.6" width="1.0" height="1.0" fill="#f8d070"/><rect x="24.5" y="41.7" width="1.8" height="1.0" fill="#f0b040"/><rect x="42.7" y="32.1" width="1.0" height="1.0" fill="#f0b040"/><rect x="39.5" y="38.9" width="1.0" height="1.0" fill="#f8d070"/><rect x="56.4" y="39.8" width="1.8" height="1.0" fill="#fff0c0"/><rect x="34.3" y="32.5" width="1.8" height="1.0" fill="#f0b040"/><rect x="24.8" y="24.0" width="1.3" height="1.3" fill="#f8d070"/><rect x="9.0" y="44.7" width="1.8" height="1.0" fill="#a85010"/><rect x="13.3" y="42.4" width="1.8" height="1.3" fill="#e89828"/><rect x="40.6" y="27.4" width="1.3" height="1.0" fill="#a85010"/><rect x="12.1" y="39.7" width="1.3" height="1.3" fill="#f8d070"/><rect x="41.3" y="44.8" width="1.3" height="2.0" fill="#c06818"/><rect x="6.2" y="42.6" width="1.3" height="1.3" fill="#e89828"/><rect x="26.8" y="45.5" width="1.0" height="1.0" fill="#a85010"/><rect x="19.0" y="36.6" width="1.0" height="2.0" fill="#fff0c0"/><rect x="29.3" y="38.8" width="1.3" height="1.3" fill="#c06818"/><rect x="2.5" y="45.5" width="1.3" height="2.0" fill="#f8d070"/><rect x="60.8" y="42.5" width="1.3" height="1.3" fill="#c06818"/><rect x="1.0" y="38.9" width="1.8" height="1.0" fill="#fff0c0"/><rect x="38.2" y="34.6" width="1.0" height="1.0" fill="#f8d070"/><rect x="47.9" y="35.4" width="1.8" height="1.0" fill="#c06818"/><rect x="37.2" y="43.9" width="1.8" height="1.0" fill="#f8d070"/><rect x="3.7" y="42.8" width="1.8" height="2.0" fill="#c06818"/><rect x="12.6" y="44.2" width="1.0" height="2.0" fill="#a85010"/><rect x="56.2" y="38.6" width="1.3" height="2.0" fill="#e89828"/><rect x="48.6" y="34.8" width="1.8" height="1.3" fill="#f0b040"/><rect x="26.9" y="24.3" width="1.3" height="2.0" fill="#e89828"/><rect x="4.7" y="42.8" width="1.3" height="1.3" fill="#a85010"/><rect x="30.2" y="30.2" width="1.0" height="1.3" fill="#f8d070"/><rect x="29.0" y="42.4" width="1.3" height="1.3" fill="#c06818"/><rect x="36.6" y="38.7" width="1.0" height="1.3" fill="#fff0c0"/><rect x="22.6" y="24.5" width="1.0" height="1.3" fill="#f0b040"/><rect x="14.9" y="40.4" width="1.3" height="1.3" fill="#c06818"/><rect x="21.6" y="25.0" width="1.3" height="1.0" fill="#f8d070"/><rect x="11.0" y="45.5" width="1.0" height="1.0" fill="#fff0c0"/><rect x="50.2" y="40.0" width="1.3" height="1.0" fill="#c06818"/><rect x="41.9" y="39.2" width="1.0" height="1.3" fill="#f0b040"/><rect x="59.7" y="41.8" width="1.3" height="1.0" fill="#a85010"/><rect x="45.1" y="45.8" width="1.0" height="1.3" fill="#fff0c0"/><rect x="32.5" y="47.0" width="1.0" height="1.3" fill="#f8d070"/><rect x="36.2" y="46.5" width="1.3" height="1.3" fill="#f0b040"/><rect x="1.0" y="47.5" width="1.0" height="1.0" fill="#a85010"/><rect x="31.3" y="46.1" width="1.8" height="1.3" fill="#f8d070"/><rect x="58.9" y="43.4" width="1.3" height="1.0" fill="#fff0c0"/><rect x="43.3" y="43.1" width="1.3" height="2.0" fill="#f0b040"/><rect x="54.4" y="32.4" width="1.3" height="1.3" fill="#f8d070"/><rect x="44.5" y="44.7" width="1.8" height="1.0" fill="#c06818"/><rect x="19.8" y="40.2" width="1.8" height="1.0" fill="#a85010"/><rect x="44.4" y="26.7" width="1.3" height="2.0" fill="#f8d070"/><rect x="40.7" y="34.6" width="1.3" height="2.0" fill="#f8d070"/><rect x="11.4" y="36.5" width="1.0" height="1.0" fill="#a85010"/><rect x="31.5" y="38.0" width="1.0" height="1.0" fill="#c06818"/><rect x="18.5" y="38.0" width="1.8" height="1.0" fill="#f0b040"/><rect x="12.7" y="45.4" width="1.8" height="2.0" fill="#fff0c0"/><rect x="47.4" y="30.4" width="1.0" height="1.0" fill="#f0b040"/><rect x="33.2" y="37.5" width="1.8" height="1.3" fill="#c06818"/><rect x="24.8" y="40.9" width="1.0" height="1.3" fill="#e89828"/><rect x="5.7" y="42.5" width="1.3" height="1.3" fill="#fff0c0"/><rect x="23.6" y="41.8" width="1.3" height="1.3" fill="#fff0c0"/><rect x="57.8" y="41.3" width="1.8" height="2.0" fill="#a85010"/><rect x="19.2" y="41.2" width="1.0" height="1.3" fill="#e89828"/><rect x="36.8" y="35.2" width="1.0" height="1.0" fill="#f0b040"/><rect x="11.1" y="46.1" width="1.3" height="1.3" fill="#f0b040"/><rect x="45.7" y="26.4" width="1.8" height="2.0" fill="#f0b040"/><rect x="25.5" y="26.8" width="1.3" height="1.3" fill="#fff0c0"/><rect x="24.0" y="24.3" width="1.3" height="1.3" fill="#f0b040"/><rect x="56.0" y="25.7" width="1.3" height="1.0" fill="#fff0c0"/><rect x="25.7" y="31.8" width="1.3" height="2.0" fill="#fff0c0"/><rect x="46.8" y="24.7" width="1.3" height="2.0" fill="#f8d070"/><rect x="17.1" y="35.6" width="1.3" height="1.3" fill="#f0b040"/><rect x="43.6" y="43.4" width="1.3" height="1.0" fill="#fff0c0"/><rect x="26.3" y="43.5" width="1.3" height="1.3" fill="#a85010"/><rect x="56.2" y="35.6" width="1.8" height="1.0" fill="#f0b040"/><rect x="6.2" y="40.4" width="1.3" height="1.3" fill="#c06818"/><rect x="24.6" y="29.1" width="1.3" height="1.0" fill="#f8d070"/><rect x="30.9" y="42.3" width="1.8" height="1.0" fill="#c06818"/><rect x="46.9" y="34.4" width="1.3" height="2.0" fill="#f8d070"/><rect x="49.8" y="41.7" width="1.8" height="1.3" fill="#a85010"/><rect x="34.6" y="47.7" width="1.3" height="1.3" fill="#fff0c0"/><rect x="18.0" y="46.7" width="1.3" height="1.3" fill="#a85010"/><rect x="22.0" y="43.7" width="1.8" height="2.0" fill="#c06818"/><rect x="15.2" y="43.8" width="1.8" height="1.0" fill="#fff0c0"/><rect x="41.5" y="42.8" width="1.8" height="1.3" fill="#a85010"/><rect x="20.5" y="39.6" width="1.0" height="1.3" fill="#f8d070"/><rect x="21.8" y="30.4" width="1.3" height="1.0" fill="#f0b040"/><rect x="60.0" y="41.9" width="1.8" height="1.0" fill="#f0b040"/><rect x="40.7" y="47.4" width="1.0" height="2.0" fill="#e89828"/><rect x="56.5" y="46.8" width="1.0" height="2.0" fill="#f0b040"/><rect x="46.2" y="27.3" width="1.3" height="2.0" fill="#fff0c0"/><rect x="47.3" y="43.2" width="1.8" height="1.3" fill="#f0b040"/><rect x="0.8" y="44.9" width="1.8" height="2.0" fill="#fff0c0"/><rect x="3.7" y="36.9" width="1.0" height="1.3" fill="#f8d070"/><rect x="52.7" y="41.6" width="1.0" height="2.0" fill="#e89828"/><rect x="16.0" y="32.2" width="1.3" height="1.3" fill="#a85010"/><rect x="45.6" y="24.9" width="1.0" height="1.3" fill="#fff0c0"/><rect x="40.7" y="40.5" width="1.8" height="2.0" fill="#e89828"/><rect x="25.6" y="29.9" width="1.0" height="1.0" fill="#c06818"/><rect x="18.8" y="43.3" width="1.3" height="2.0" fill="#c06818"/><rect x="18.0" y="47.8" width="1.0" height="2.0" fill="#e89828"/><rect x="2.3" y="42.7" width="1.3" height="1.0" fill="#f0b040"/><rect x="19.9" y="40.8" width="1.8" height="2.0" fill="#c06818"/><rect x="46.7" y="30.9" width="1.3" height="1.3" fill="#fff0c0"/><rect x="15.1" y="36.6" width="1.3" height="1.3" fill="#f0b040"/><rect x="6.6" y="43.0" width="1.0" height="1.3" fill="#c06818"/><rect x="3.3" y="37.3" width="1.3" height="1.0" fill="#f8d070"/><rect x="0.6" y="37.7" width="1.3" height="2.0" fill="#c06818"/><rect x="7.2" y="43.9" width="1.3" height="1.0" fill="#f0b040"/><rect x="2.9" y="38.9" width="1.3" height="1.0" fill="#f0b040"/><rect x="33.5" y="43.5" width="1.0" height="1.0" fill="#f8d070"/><rect x="61.1" y="39.5" width="1.3" height="1.0" fill="#f0b040"/><rect x="59.6" y="48.0" width="1.0" height="1.3" fill="#a85010"/><rect x="58.6" y="46.1" width="1.3" height="2.0" fill="#f8d070"/><rect x="17.9" y="34.3" width="1.0" height="1.0" fill="#c06818"/><rect x="25.7" y="25.7" width="1.8" height="2.0" fill="#f0b040"/><rect x="60.0" y="41.0" width="1.3" height="2.0" fill="#a85010"/><rect x="59.7" y="45.8" width="1.8" height="1.3" fill="#f0b040"/><rect x="50.0" y="40.3" width="1.0" height="1.3" fill="#f8d070"/><rect x="60.1" y="45.0" width="1.8" height="1.3" fill="#a85010"/><rect x="35.7" y="44.3" width="1.8" height="1.0" fill="#c06818"/><rect x="34.1" y="38.2" width="1.3" height="1.3" fill="#c06818"/><rect x="40.5" y="34.8" width="1.8" height="1.0" fill="#f0b040"/><rect x="41.9" y="46.3" width="1.8" height="1.0" fill="#c06818"/><rect x="36.4" y="27.7" width="1.0" height="1.3" fill="#c06818"/><rect x="4.0" y="46.5" width="1.8" height="1.3" fill="#fff0c0"/><rect x="5.8" y="43.3" width="1.0" height="2.0" fill="#fff0c0"/><rect x="37.0" y="24.7" width="1.8" height="1.0" fill="#c06818"/><rect x="24.2" y="47.7" width="1.3" height="2.0" fill="#f8d070"/><rect x="49.9" y="35.6" width="1.8" height="2.0" fill="#f0b040"/><rect x="55.5" y="27.7" width="1.8" height="1.0" fill="#f8d070"/><rect x="34.6" y="39.0" width="1.0" height="1.0" fill="#a85010"/><rect x="47.5" y="41.1" width="1.0" height="2.0" fill="#fff0c0"/><rect x="20.0" y="41.1" width="1.3" height="1.0" fill="#fff0c0"/><rect x="10.4" y="37.6" width="1.3" height="1.0" fill="#a85010"/><rect x="15.5" y="38.6" width="1.8" height="1.3" fill="#e89828"/><rect x="49.1" y="25.6" width="1.8" height="1.3" fill="#f0b040"/><rect x="49.6" y="41.9" width="1.0" height="1.0" fill="#f8d070"/><rect x="42.9" y="44.7" width="1.3" height="1.3" fill="#f0b040"/><rect x="55.1" y="34.4" width="1.3" height="1.0" fill="#e89828"/><rect x="6.5" y="44.4" width="1.0" height="2.0" fill="#a85010"/><rect x="35.9" y="29.3" width="1.8" height="1.3" fill="#f0b040"/><rect x="14.5" y="38.1" width="1.0" height="1.0" fill="#f0b040"/><rect x="33.9" y="34.1" width="1.0" height="2.0" fill="#c06818"/><rect x="56.7" y="39.9" width="1.8" height="1.0" fill="#e89828"/><rect x="5.7" y="41.1" width="1.8" height="2.0" fill="#fff0c0"/><rect x="48.3" y="24.4" width="1.8" height="1.0" fill="#c06818"/><rect x="58.3" y="45.1" width="1.0" height="2.0" fill="#e89828"/><rect x="54.3" y="33.8" width="1.0" height="1.0" fill="#fff0c0"/><rect x="38.8" y="25.7" width="1.0" height="2.0" fill="#a85010"/><rect x="14.4" y="46.2" width="1.3" height="1.0" fill="#fff0c0"/><rect x="47.9" y="39.6" width="1.3" height="1.3" fill="#f0b040"/><rect x="29.9" y="29.7" width="1.3" height="1.3" fill="#e89828"/><rect x="21.4" y="40.7" width="1.8" height="1.0" fill="#e89828"/><rect x="26.2" y="29.2" width="1.3" height="2.0" fill="#f0b040"/><rect x="19.4" y="47.7" width="1.0" height="1.0" fill="#f8d070"/><rect x="37.3" y="35.1" width="1.8" height="1.0" fill="#fff0c0"/><rect x="2.4" y="42.5" width="1.8" height="1.0" fill="#f0b040"/><rect x="13.3" y="37.1" width="1.3" height="1.0" fill="#fff0c0"/><rect x="31.4" y="36.1" width="1.3" height="1.3" fill="#e89828"/><rect x="9.4" y="46.3" width="1.0" height="2.0" fill="#fff0c0"/><rect x="25.8" y="36.4" width="1.8" height="1.3" fill="#f0b040"/><rect x="26.4" y="34.4" width="1.0" height="2.0" fill="#fff0c0"/><rect x="32.5" y="36.0" width="1.0" height="1.3" fill="#e89828"/><rect x="28.8" y="36.2" width="1.8" height="2.0" fill="#f8d070"/><rect x="51.3" y="31.5" width="1.8" height="1.3" fill="#fff0c0"/><rect x="55.7" y="34.0" width="1.3" height="1.0" fill="#f0b040"/><rect x="60.9" y="40.2" width="1.8" height="1.0" fill="#c06818"/><rect x="37.6" y="34.9" width="1.3" height="2.0" fill="#c06818"/><rect x="9.4" y="48.0" width="1.0" height="2.0" fill="#f8d070"/><rect x="50.1" y="36.3" width="1.8" height="1.0" fill="#e89828"/><rect x="31.8" y="28.9" width="1.8" height="1.3" fill="#a85010"/><rect x="33.6" y="42.7" width="1.3" height="1.3" fill="#e89828"/><rect x="44.2" y="43.0" width="1.8" height="2.0" fill="#c06818"/><rect x="61.4" y="41.0" width="1.3" height="1.0" fill="#f0b040"/><rect x="55.2" y="44.0" width="1.8" height="1.0" fill="#e89828"/><rect x="30.7" y="41.1" width="1.8" height="1.3" fill="#a85010"/><rect x="9.8" y="38.8" width="1.3" height="1.0" fill="#f0b040"/><rect x="15.6" y="40.9" width="1.3" height="1.3" fill="#f8d070"/><rect x="46.1" y="32.3" width="1.3" height="1.0" fill="#f0b040"/><rect x="55.0" y="40.0" width="1.8" height="1.3" fill="#fff0c0"/></svg></div>
<div class="a" style="left:1211px;top:683px;width:68px;height:68px;background:#a6a9ae;box-shadow:inset 0 0 0 1px #6c6f75"></div>
<div class="a" style="left:1214px;top:692px;width:62px;height:50px"><svg width="62" height="50" viewBox="0 0 62 50"><defs><linearGradient id="t5" x1="0" y1="0" x2="1" y2="0"><stop offset="0" stop-color="#b86c20"/><stop offset=".45" stop-color="#f0c080"/><stop offset=".6" stop-color="#2a1406"/></linearGradient></defs><rect width="62" height="50" fill="#0c0604"/><path d="M0 0h34L22 20q-2 5 4 6l8-2-14 16q-6 4-20 2z" fill="url(#t5)" opacity=".8"/><g stroke="#0c0604" stroke-width=".7" opacity=".5"><path d="M-8 0L10 44M0 0L34 -10"/><path d="M-5 0L13 44M0 3L34 -7"/><path d="M-2 0L16 44M0 6L34 -4"/><path d="M1 0L19 44M0 9L34 -1"/><path d="M4 0L22 44M0 12L34 2"/><path d="M7 0L25 44M0 15L34 5"/><path d="M10 0L28 44M0 18L34 8"/><path d="M13 0L31 44M0 21L34 11"/><path d="M16 0L34 44M0 24L34 14"/><path d="M19 0L37 44M0 27L34 17"/><path d="M22 0L40 44M0 30L34 20"/><path d="M25 0L43 44M0 33L34 23"/><path d="M28 0L46 44M0 36L34 26"/><path d="M31 0L49 44M0 39L34 29"/><path d="M34 0L52 44M0 42L34 32"/><path d="M37 0L55 44M0 45L34 35"/></g><path d="M34 0h14L36 16q-4 5-10 4-5-2-2-7z" fill="#0e0a06"/><path d="M48 0L36 16q-4 5-10 4" stroke="#fce8c0" stroke-width="1.600" fill="none"/><g stroke="#e8a050" stroke-width="1" fill="none"><path d="M28 24L14 50"/><path d="M28 24L62 14"/><path d="M28 24L20 50"/><path d="M28 24L62 18"/><path d="M28 24L26 50"/><path d="M28 24L62 22"/><path d="M28 24L32 50"/><path d="M28 24L62 26"/><path d="M28 24L38 50"/><path d="M28 24L62 30"/><path d="M28 24L44 50"/><path d="M28 24L62 34"/><path d="M28 24L50 50"/><path d="M28 24L62 38"/><path d="M28 24L56 50"/><path d="M28 24L62 42"/><path d="M28 24L62 50"/><path d="M28 24L62 46"/><path d="M28 24L68 50"/><path d="M28 24L62 50"/><path d="M20 50Q40 36 62 22"/><path d="M29 50Q45 38 62 28"/><path d="M38 50Q50 40 62 34"/><path d="M47 50Q55 42 62 40"/><path d="M56 50Q60 44 62 46"/><path d="M48 0L62 4"/><path d="M50 0L62 7"/><path d="M52 0L62 10"/><path d="M54 0L62 13"/><path d="M56 0L62 16"/><path d="M58 0L62 19"/><path d="M60 0L62 22"/></g></svg></div>
<div class="a" style="left:1286px;top:683px;width:68px;height:68px;background:#a6a9ae;box-shadow:inset 0 0 0 1px #6c6f75"></div>
<div class="a" style="left:1289px;top:692px;width:62px;height:50px"><svg width="62" height="50" viewBox="0 0 62 50"><defs><linearGradient id="t6" x1="0" y1="0" x2="0" y2="1"><stop offset="0" stop-color="#040c30"/><stop offset="1" stop-color="#1c4468"/></linearGradient></defs><rect width="62" height="50" fill="url(#t6)"/><path d="M23 50L42.500 0h19.500v50z" fill="#c43c28"/><path d="M23 50L42.500 0h1.500L25 50z" fill="#f4ece8"/><g stroke="#a82c1c" stroke-width=".7"><path d="M46 0L30 50"/><path d="M49 0L34 50"/><path d="M52 0L38 50"/><path d="M55 0L42 50"/><path d="M58 0L46 50"/><path d="M61 0L50 50"/><path d="M64 0L54 50"/><path d="M67 0L58 50"/><path d="M70 0L62 50"/></g><path d="M62 18q-8 8-6 16t-6 16h12z" fill="#7a2018" opacity=".7"/><path d="M40.500 12l5-9 2.500 10-5 7z" fill="#f4f0ec"/><path d="M42.500 12l3-5 1.500 6-3 4z" fill="#3c5848"/><path d="M6 50V30q0-4 3-5h10q3 1 3 5l1 20z" fill="#f6f8fa"/><path d="M3 25q0-3 3-4l1-6h14l1 6q3 1 3 4l-2 3h-18z" fill="#28404c"/><path d="M9 15l2-4h6l2 4zM13 11l1-2 1 2z" fill="#34505c"/><path d="M8 17h12v4h-12z" fill="#6c8890"/><path d="M0 38h6v12h-6z" fill="#0c1420"/><path d="M4 25h22" stroke="#8aa0a8" stroke-width=".8" stroke-dasharray="1 1"/></svg></div>
<div class="a" style="left:1361px;top:683px;width:68px;height:68px;background:#a6a9ae;box-shadow:inset 0 0 0 1px #6c6f75"></div>
<div class="a" style="left:1364px;top:692px;width:62px;height:50px"><svg width="62" height="50" viewBox="0 0 62 50"><defs><linearGradient id="t7" x1="0" y1="0" x2="0" y2="1"><stop offset="0" stop-color="#0838c0"/><stop offset=".7" stop-color="#4c8ce8"/></linearGradient><filter id="b7" x="-.2" y="-.2" width="1.400" height="1.400"><feGaussianBlur stdDeviation=".8"/></filter></defs><rect width="62" height="50" fill="url(#t7)"/><g filter="url(#b7)"><g fill="#f4e8f8"><ellipse cx="5" cy="9" rx="8" ry="4"/><ellipse cx="16" cy="14" rx="9" ry="4"/><ellipse cx="28" cy="19" rx="9" ry="4.500"/><ellipse cx="40" cy="24" rx="9" ry="4"/><ellipse cx="52" cy="28" rx="9" ry="3"/><ellipse cx="60" cy="19" rx="4" ry="2.500"/><ellipse cx="6" cy="29" rx="8" ry="2.500"/><ellipse cx="18" cy="25" rx="5" ry="2"/><ellipse cx="26" cy="31" rx="4" ry="1.500"/></g><g fill="#c4a0d4"><ellipse cx="22" cy="18.500" rx="9" ry="1.800"/><ellipse cx="38" cy="27" rx="12" ry="1.800"/><ellipse cx="54" cy="31" rx="8" ry="1.500"/><ellipse cx="8" cy="31.500" rx="7" ry="1"/></g></g><path d="M0 37l10-.500 12 1 8-2 10 1 10-3 12-1v20h-62z" fill="#9c4430"/><path d="M0 40l14 1 16-2 14 0 18-4v15h-62z" fill="#140c0c"/></svg></div>
<div class="a" style="left:1441px;top:607px;width:17px;height:144px;border-radius:8px;background:linear-gradient(90deg,#d0d2d6 0,#2c2c2c 2px,#4a4a4a 5px,#8c8c8c 10px,#a8a8a8 13px,#e0e2e6 15px,#b0b3b8 17px)"></div>
<div class="a" style="left:1441px;top:607px;width:17px;height:21px;border-radius:8px 8px 0 0;background:linear-gradient(90deg,#5a66b8 0,#aab4ec 3px,#eef0ff 6px,#9aa6e4 10px,#6f7bc8 14px,#4c58a0 17px)"><svg width="17" height="21"><path d="M4 15h9l-4.500-7z" fill="#000"/></svg></div>
<div class="a" style="left:1441px;top:730px;width:17px;height:21px;border-radius:0 0 8px 8px;background:linear-gradient(90deg,#5a66b8 0,#aab4ec 3px,#eef0ff 6px,#9aa6e4 10px,#6f7bc8 14px,#4c58a0 17px)"><svg width="17" height="21"><path d="M4 6h9l-4.500 7z" fill="#000"/></svg></div>
<div class="a" style="left:1442px;top:628px;width:15px;height:15px;border-radius:50%;background:radial-gradient(circle at 40% 35%,#f4f6ff 0,#b0baf0 35%,#6874c0 75%,#404a90 100%)"></div>
<svg class="a" style="left:1470px;top:687px" width="68" height="62" viewBox="0 0 68 62"><defs><linearGradient id="okg" x1="0" y1="0" x2="1" y2="1"><stop offset="0" stop-color="#868fc8"/><stop offset=".45" stop-color="#b4bce6"/><stop offset="1" stop-color="#dfe3f8"/></linearGradient></defs><path d="M12 2.500h40q13 1 12 12q-6 34-50 43q-10 1-11-9v-36q0-9 9-10z" fill="#e4e6ea" stroke="#2c2e32" stroke-width="1.800"/><path d="M13 5.500h38q10 1 9 9.500q-6 29-45 38q-7 1-8-6.500v-33q0-7 6-8z" fill="url(#okg)" stroke="#5a6098" stroke-width="1.300"/><text x="30" y="33" text-anchor="middle" font-family="Liberation Sans,sans-serif" font-size="13" fill="#101020">OK</text></svg>
<!-- s_dialog -->
<div class="a win" style="left:760px;top:801px;width:362px;height:122px"></div>
<div class="a" style="left:764px;top:805px;width:355px;height:18px;background:linear-gradient(90deg,#808080,#c0c0c0)"></div>
<div class="a sunk" style="left:800px;top:840px;width:292px;height:20px;background:#fff"></div>
<div class="a ui" style="right:744px;top:843px;letter-spacing:0.3px">Yahoo! Digital Camera (USB)</div>
<div class="a btn" style="left:1075px;top:842px;width:15px;height:16px"><svg width="15" height="16"><path d="M4 6h7l-3.500 4z" fill="#000"/></svg></div>
<div class="a btn" style="left:863px;top:879px;width:70px;height:22px"></div>
<div class="a ui" style="left:877px;top:883px;letter-spacing:0.06px">ライブ(<u>L</u>)</div>
<div class="a btn" style="left:944px;top:879px;width:70px;height:22px"></div>
<div class="a ui" style="left:946px;top:883px;letter-spacing:-0.04px">キャプチャ(<u>C</u>)</div>
<div class="a btn" style="left:1023px;top:879px;width:70px;height:22px"></div>
<div class="a ui" style="left:1038px;top:883px;letter-spacing:-0.17px">終了(<u>D</u>)</div>
<!-- s_main -->
<div class="a win" style="left:11px;top:12px;width:863px;height:999px"></div>
<div class="a" style="left:15px;top:16px;width:855px;height:18px;background:linear-gradient(90deg,#0a246a 0%,#a6caf0 100%)"></div>
<svg class="a" style="left:17px;top:17px" width="16" height="16" viewBox="0 0 16 16"><rect x="0" y="0" width="16" height="16" fill="#1c1c28"/><rect x="1.500" y="1" width="13.500" height="6.500" fill="#fff"/><path d="M1.500 3.200h4.500l3-1.500h2.500l3.500 2.500" stroke="#9a70d0" stroke-width="1" fill="none"/><path d="M1.500 4.800h5l2.500-.6h3l3 .8" stroke="#e080b0" stroke-width="1" fill="none"/><rect x="1.500" y="5.800" width="13.500" height="1.800" fill="#58b058"/><path d="M2 5.800h5" stroke="#d8d060" stroke-width="1"/><circle cx="12.300" cy="3.300" r="1" fill="#401040"/><path d="M2 8.700h13" stroke="#c8c8d0" stroke-width="1" stroke-dasharray="2.500 .8"/><rect x="2" y="10" width="13" height="5" fill="#fff"/><rect x="3.500" y="10.600" width="2.700" height="4.400" fill="#e01010"/><rect x="7.500" y="10.600" width="2.700" height="4.400" fill="#0808d0"/><rect x="11.300" y="10.300" width="3" height="4.700" fill="#10e010"/></svg>
<div class="a ui" style="left:34px;top:17px;font-weight:bold;color:#fff;font-size:12px;line-height:16px;letter-spacing:0.55px">ソフトサーモ計測 − 計測1 - [折れ線グラフ 1]</div>
<div class="a btn" style="left:818px;top:18px;width:16px;height:14px"><svg width="16" height="14"><rect x="4" y="9" width="6" height="2" fill="#000"/></svg></div>
<div class="a btn" style="left:834px;top:18px;width:16px;height:14px"><svg width="16" height="14"><rect x="3.5" y="2.5" width="8" height="8" fill="none" stroke="#000"/><rect x="3" y="2" width="9" height="2" fill="#000"/></svg></div>
<div class="a btn" style="left:852px;top:18px;width:16px;height:14px"><svg width="16" height="14"><path d="M4 3l7 7M11 3l-7 7" stroke="#000" stroke-width="1.6"/></svg></div>
<svg class="a" style="left:19px;top:36px" width="16" height="16" viewBox="0 0 16 16"><rect x="0" y="0" width="16" height="16" fill="#1c1c28"/><rect x="1.500" y="1" width="13.500" height="6.500" fill="#fff"/><path d="M1.500 3.200h4.500l3-1.500h2.500l3.500 2.500" stroke="#9a70d0" stroke-width="1" fill="none"/><path d="M1.500 4.800h5l2.500-.6h3l3 .8" stroke="#e080b0" stroke-width="1" fill="none"/><rect x="1.500" y="5.800" width="13.500" height="1.800" fill="#58b058"/><path d="M2 5.800h5" stroke="#d8d060" stroke-width="1"/><circle cx="12.300" cy="3.300" r="1" fill="#401040"/><path d="M2 8.700h13" stroke="#c8c8d0" stroke-width="1" stroke-dasharray="2.500 .8"/><rect x="2" y="10" width="13" height="5" fill="#fff"/><rect x="3.500" y="10.600" width="2.700" height="4.400" fill="#e01010"/><rect x="7.500" y="10.600" width="2.700" height="4.400" fill="#0808d0"/><rect x="11.300" y="10.300" width="3" height="4.700" fill="#10e010"/></svg>
<div class="a ui" style="left:42px;top:36px;text-shadow:1px 1px #fff;color:#808080;letter-spacing:-1.93px">ファイル(<u>F</u>)</div>
<div class="a ui" style="left:99px;top:36px;color:#000;letter-spacing:-0.42px">表示(<u>D</u>)</div>
<div class="a ui" style="left:153px;top:36px;color:#000;letter-spacing:-0.09px">設定(<u>Z</u>)</div>
<div class="a ui" style="left:206px;top:36px;color:#000;letter-spacing:-0.50px">測定(<u>S</u>)</div>
<div class="a ui" style="left:258px;top:36px;color:#000;letter-spacing:-0.17px">ｳｨﾝﾄﾞｳ(<u>W</u>)</div>
<div class="a ui" style="left:327px;top:36px;color:#000;letter-spacing:-0.11px">ﾍﾙﾌﾟ(<u>H</u>)</div>
<div class="a btn" style="left:818px;top:37px;width:16px;height:14px"><svg width="16" height="14"><rect x="4" y="9" width="6" height="2" fill="#000"/></svg></div>
<div class="a btn" style="left:834px;top:37px;width:16px;height:14px"><svg width="16" height="14"><rect x="5.5" y="2.5" width="5" height="5" fill="none" stroke="#000"/><rect x="5" y="2" width="6" height="2" fill="#000"/><rect x="3.5" y="5.5" width="5" height="5" fill="#d4d0c8" stroke="#000"/><rect x="3" y="5" width="6" height="2" fill="#000"/></svg></div>
<div class="a btn" style="left:852px;top:37px;width:16px;height:14px"><svg width="16" height="14"><path d="M4 3l7 7M11 3l-7 7" stroke="#000" stroke-width="1.6"/></svg></div>
<div class="a" style="left:15px;top:54px;width:855px;height:33px;box-shadow:inset 0 1px #fff,inset -1px 0 #808080,inset 1px 0 #fff,inset 0 -1px #808080"></div>
<div class="a" style="left:23px;top:58px;width:25px;height:25px;background:#fff;background-image:repeating-conic-gradient(#d4d0c8 0 25%,#fff 0 50%);background-size:2px 2px;box-shadow:inset 1px 1px #404040,inset -1px -1px #fff,inset 2px 2px #808080"></div>
<div class="a ui" style="left:23px;top:65px;width:26px;text-align:center;letter-spacing:-0.5px">D1</div>
<div class="a tb" style="left:48px"></div><div class="a ui" style="left:48px;top:64px;width:25px;text-align:center;letter-spacing:-0.5px">D2</div>
<div class="a tb" style="left:73px"></div><div class="a ui" style="left:73px;top:64px;width:25px;text-align:center;letter-spacing:-0.5px">D3</div>
<div class="a tb" style="left:105px"></div><div class="a ui" style="left:105px;top:64px;width:25px;text-align:center;letter-spacing:-0.5px">Y1</div>
<div class="a tb" style="left:130px"></div><div class="a ui" style="left:130px;top:64px;width:25px;text-align:center;letter-spacing:-0.5px">Y2</div>
<div class="a tb" style="left:155px"></div><div class="a ui" style="left:155px;top:64px;width:25px;text-align:center;letter-spacing:-0.5px">Y3</div>
<div class="a tb" style="left:187px"><svg width="25" height="25" viewBox="0 0 25 25"><path d="M12 3l9 10h-7v9h-4v-9h-7z" fill="#000"/></svg></div>
<div class="a tb" style="left:212px"><svg width="25" height="25" viewBox="0 0 25 25"><path d="M12 22l9-10h-7v-9h-4v9h-7z" fill="#000"/></svg></div>
<div class="a tb" style="left:237px"><svg width="25" height="25" viewBox="0 0 25 25"><path d="M12 3l9 8h-18zM12 22l9-8h-18z" fill="#000"/></svg></div>
<div class="a tb" style="left:262px"><svg width="25" height="25" viewBox="0 0 25 25"><path d="M3 3h19l-9.5 9.5zM3 22h19l-9.5-9.5z" fill="#000"/></svg></div>
<div class="a tb" style="left:294px"><svg width="25" height="25" viewBox="0 0 25 25"><path d="M3 12.500l9-9v18zM12 12.500l9-9v18z" fill="#000"/></svg></div>
<div class="a tb" style="left:319px"><svg width="25" height="25" viewBox="0 0 25 25"><path d="M3 12.500l10-9v7h9v4h-9v7z" fill="#000"/></svg></div>
<div class="a tb" style="left:344px"><svg width="25" height="25" viewBox="0 0 25 25"><rect x="6" y="6" width="13" height="13" fill="#000"/></svg></div>
<div class="a tb" style="left:369px"><svg width="25" height="25" viewBox="0 0 25 25"><path d="M22 12.500l-10-9v7h-9v4h9v7z" fill="#000"/></svg></div>
<div class="a tb" style="left:394px"><svg width="25" height="25" viewBox="0 0 25 25"><path d="M22 12.500l-9-9v18zM13 12.500l-9-9v18z" fill="#000"/></svg></div>
<div class="a tb" style="left:419px"><svg width="25" height="25" viewBox="0 0 25 25"><path d="M3 12.500l8-9v18zM22 12.500l-8-9v18z" fill="#000"/></svg></div>
<div class="a tb" style="left:444px"><svg width="25" height="25" viewBox="0 0 25 25"><path d="M3 3.500l9.500 9-9.500 9zM22 3.500l-9.500 9 9.500 9z" fill="#000"/></svg></div>
<div class="a tb" style="left:479px"><svg width="25" height="25" viewBox="0 0 25 25"><path d="M6 5v15M4 18h17" stroke="#000" fill="none"/><path d="M7 8h13M7 11h13M7 14h13" stroke="#909090" fill="none"/><path d="M6 17c5 0 5-9 8-9s3 9 7 9" stroke="#e00000" fill="none"/><path d="M13.500 5v13" stroke="#0000e0"/></svg></div>
<div class="a rais1" style="left:23px;top:95px;width:839px;height:838px"></div>
<div class="a" style="left:31px;top:103px;width:823px;height:770px;background:#fff"></div>
<div class="a" style="left:31px;top:873px;width:823px;height:2px;background:#e8e6e0"></div>
<div class="a mono" style="left:31px;top:875px;width:135px;height:39px;background:#fff;color:#800000;padding-top:1px">Comp-low
CH1 [℃]
-----</div>
<div class="a mono" style="left:168px;top:875px;width:135px;height:39px;background:#fff;color:#808000;padding-top:1px">Comp-High
CH2 [℃]
-----</div>
<div class="a mono" style="left:305px;top:875px;width:135px;height:39px;background:#fff;color:#0070c8;padding-top:1px">MDF-330-2(-50)
CH3 [℃]
-65.6</div>
<div class="a mono" style="left:442px;top:875px;width:135px;height:39px;background:#fff;color:#20c020;padding-top:1px">
CH4 []
-----</div>
<div class="a mono" style="left:579px;top:875px;width:135px;height:39px;background:#fff;color:#000;padding-top:1px">MDF-190
CH5 [℃]
-62.3</div>
<div class="a mono" style="left:716px;top:875px;width:135px;height:39px;background:#fff;color:#c00000;padding-top:1px">2110Temp
CH6 [mV]
-81.6</div>
<style>.ct{font-family:"Liberation Mono",monospace;font-size:12.500px;letter-spacing:-0.5px}</style><svg class="a" style="left:31px;top:103px" width="823" height="770" viewBox="31 103 823 770"><path d="M94.500 125v680" stroke="#800000" fill="none" shape-rendering="crispEdges"/><path d="M88 125.5h6" stroke="#800000" shape-rendering="crispEdges"/><text x="87" y="129.5" text-anchor="end" class="ct" fill="#800000">-50.0</text><path d="M88 193.5h6" stroke="#800000" shape-rendering="crispEdges"/><text x="87" y="197.5" text-anchor="end" class="ct" fill="#800000">-55.0</text><path d="M88 261.5h6" stroke="#800000" shape-rendering="crispEdges"/><text x="87" y="265.5" text-anchor="end" class="ct" fill="#800000">-60.0</text><path d="M88 329.5h6" stroke="#800000" shape-rendering="crispEdges"/><text x="87" y="333.5" text-anchor="end" class="ct" fill="#800000">-65.0</text><path d="M88 396.5h6" stroke="#800000" shape-rendering="crispEdges"/><text x="87" y="400.5" text-anchor="end" class="ct" fill="#800000">-70.0</text><path d="M88 464.5h6" stroke="#800000" shape-rendering="crispEdges"/><text x="87" y="468.5" text-anchor="end" class="ct" fill="#800000">-75.0</text><path d="M88 532.5h6" stroke="#800000" shape-rendering="crispEdges"/><text x="87" y="536.5" text-anchor="end" class="ct" fill="#800000">-80.0</text><path d="M88 600.5h6" stroke="#800000" shape-rendering="crispEdges"/><text x="87" y="604.5" text-anchor="end" class="ct" fill="#800000">-85.0</text><path d="M88 668.5h6" stroke="#800000" shape-rendering="crispEdges"/><text x="87" y="672.5" text-anchor="end" class="ct" fill="#800000">-90.0</text><path d="M88 736.5h6" stroke="#800000" shape-rendering="crispEdges"/><text x="87" y="740.5" text-anchor="end" class="ct" fill="#800000">-95.0</text><path d="M88 804.5h6" stroke="#800000" shape-rendering="crispEdges"/><text x="87" y="808.5" text-anchor="end" class="ct" fill="#800000">-100.0</text><text x="78" y="118" class="ct" fill="#800000">Y1</text><path d="M95.500 804.500h680v22h-680z" stroke="#000" fill="none" shape-rendering="crispEdges"/><path d="M95.5 827v9" stroke="#000" shape-rendering="crispEdges"/><text x="99.0" y="838" class="ct">2026/04/13</text><text x="99.0" y="851" class="ct">9:59:40.5</text><path d="M208.5 827v9" stroke="#000" shape-rendering="crispEdges"/><text x="212.0" y="838" class="ct">2026/04/13</text><text x="211.0" y="851" class="ct">12:08:04.0</text><path d="M321.5 827v9" stroke="#000" shape-rendering="crispEdges"/><text x="325.0" y="838" class="ct">2026/04/13</text><text x="324.0" y="851" class="ct">14:16:27.5</text><path d="M434.5 827v9" stroke="#000" shape-rendering="crispEdges"/><text x="438.0" y="838" class="ct">2026/04/13</text><text x="437.0" y="851" class="ct">16:24:51.0</text><path d="M547.5 827v9" stroke="#000" shape-rendering="crispEdges"/><text x="551.0" y="838" class="ct">2026/04/13</text><text x="550.0" y="851" class="ct">18:33:14.5</text><path d="M661.5 827v9" stroke="#000" shape-rendering="crispEdges"/><text x="665.0" y="838" class="ct">2026/04/13</text><text x="664.0" y="851" class="ct">20:41:38.0</text><path d="M775.5 827v9" stroke="#000" shape-rendering="crispEdges"/><text x="779.0" y="838" class="ct">2026/04/13</text><text x="778.0" y="851" class="ct">22:50:01.5</text><polyline points="94.6,302.1 95.8,296.5 97.1,291.2 98.3,286.5 99.6,287.9 100.9,287.5 102.2,289.3 103.5,289.6 104.9,292.6 106.3,295.6 107.7,298.5 109.1,300.1 110.5,303.9 111.9,306.2 113.2,302.3 114.4,299.3 115.7,296.7 117.0,292.7 118.3,290.5 119.6,287.6 120.8,283.8 122.2,285.9 123.6,287.7 125.1,289.6 126.5,291.7 127.9,295.9 129.4,298.9 130.8,303.1 132.3,307.3 133.5,305.4 134.7,301.9 136.0,299.5 137.2,297.8 138.4,294.2 139.6,292.5 140.9,290.7 142.1,287.5 143.5,288.6 144.9,290.0 146.2,291.7 147.5,295.3 148.7,297.6 149.9,301.1 151.1,304.2 152.3,306.6 153.5,310.4 154.9,307.0 156.3,304.0 157.7,299.9 159.1,296.8 160.5,294.5 161.9,290.6 163.2,292.7 164.5,293.7 165.8,295.7 167.1,297.9 168.3,300.7 169.5,303.5 170.7,306.6 171.9,309.7 173.2,312.6 174.4,315.2 175.7,312.0 177.1,309.1 178.4,305.6 179.7,303.0 181.1,300.8 182.4,296.7 183.8,294.4 185.0,295.7 186.2,296.6 187.5,298.7 188.8,299.3 190.0,301.0 191.6,305.7 193.2,310.2 194.8,315.2 196.1,312.6 197.4,308.4 198.7,306.0 200.0,302.9 201.3,300.1 202.6,296.4 204.0,293.3 205.4,295.8 206.9,296.6 208.3,299.2 209.8,301.0 211.2,304.9 212.6,307.0 214.0,310.2 215.4,314.2 216.7,311.8 217.9,309.0 219.2,307.0 220.4,303.7 221.7,301.6 222.9,299.5 224.2,296.4 225.4,294.2 226.7,295.2 227.9,296.7 229.2,298.4 230.4,300.1 231.7,302.1 233.3,306.5 234.9,310.5 236.5,314.6 237.7,311.4 239.0,308.1 240.2,305.5 241.5,302.6 242.7,299.6 244.0,295.8 245.2,292.7 246.5,293.6 247.7,295.0 249.0,296.5 250.2,298.4 251.5,300.0 252.8,303.4 254.1,305.8 255.4,309.0 256.7,311.5 258.0,308.4 259.3,306.1 260.7,302.5 262.0,300.3 263.4,296.4 264.7,294.4 266.0,291.2 267.3,291.9 268.5,293.6 269.8,294.5 271.0,295.5 272.3,296.9 273.8,301.3 275.2,305.0 276.7,309.2 278.1,313.1 279.3,310.0 280.6,307.7 281.8,304.6 283.0,301.7 284.2,299.0 285.5,296.7 286.7,292.8 287.9,290.6 289.2,292.1 290.4,293.8 291.7,296.4 292.9,297.9 294.2,300.0 295.8,304.1 297.4,309.4 299.0,313.1 300.3,309.3 301.6,307.0 303.0,303.7 304.3,300.9 305.7,296.8 307.0,294.1 308.3,290.6 309.7,292.8 311.1,295.2 312.6,297.5 314.0,299.0 315.4,302.4 316.9,307.5 318.3,310.6 319.8,315.2 321.1,312.1 322.5,308.4 323.8,305.5 325.1,302.2 326.5,299.0 327.8,295.5 329.2,291.7 330.6,293.2 332.0,295.8 333.4,297.2 334.8,300.0 336.0,303.4 337.3,305.4 338.5,308.8 339.8,310.8 341.0,314.2 342.3,310.4 343.6,307.9 344.9,304.0 346.2,301.1 347.4,297.5 348.7,294.0 350.0,290.6 351.4,292.0 352.8,293.3 354.2,295.2 355.6,296.9 356.9,299.7 358.1,302.1 359.4,304.8 360.6,306.9 361.9,310.0 363.2,306.9 364.4,303.5 365.7,300.5 367.0,298.3 368.3,294.7 369.6,292.0 370.8,289.2 372.2,291.5 373.6,293.2 375.1,293.7 376.5,295.8 377.7,298.2 379.0,301.6 380.2,305.1 381.5,307.1 382.7,310.4 384.0,307.6 385.3,305.0 386.5,302.1 387.8,299.3 389.1,295.7 390.4,292.8 391.7,290.2 393.1,291.5 394.5,293.2 395.9,294.9 397.3,296.9 398.8,300.2 400.2,303.2 401.7,306.7 403.1,310.4 404.5,307.0 405.8,304.7 407.1,300.6 408.5,297.3 409.8,294.4 411.2,291.3 412.5,288.5 413.9,290.7 415.3,292.9 416.7,294.2 418.1,296.9 419.6,299.9 421.0,302.5 422.5,305.6 424.0,309.4 425.3,307.1 426.6,303.3 427.9,300.8 429.2,297.9 430.5,295.8 431.8,292.0 433.1,289.6 434.5,290.0 435.9,291.8 437.3,292.7 438.5,295.8 439.7,297.5 440.9,299.9 442.2,303.1 443.4,305.3 444.6,308.3 445.8,305.6 447.1,302.9 448.3,299.8 449.6,296.0 450.8,293.8 452.4,290.8 454.0,287.5 455.4,254.6 456.8,266.1 458.1,277.1 460.2,286.5 462.3,287.5 462.9,269.8 464.4,218.8 465.8,283.3 467.2,289.4 468.5,295.8 469.8,299.4 471.0,303.9 472.3,307.7 473.5,313.2 474.8,316.7 476.1,312.4 477.4,309.7 478.7,306.3 480.0,302.5 481.3,298.9 482.6,294.7 483.9,291.0 485.2,287.5 486.5,289.2 487.8,290.0 489.1,291.5 490.4,293.8 491.7,296.7 492.9,299.7 494.2,302.6 495.4,306.2 496.7,308.8 498.1,306.0 499.4,302.2 500.8,299.7 502.2,296.9 503.6,293.5 505.0,290.6 506.3,290.8 507.6,292.4 508.9,292.4 510.2,292.7 511.5,295.7 512.9,298.3 514.2,302.4 515.5,305.7 516.9,308.3 518.2,304.9 519.5,301.1 520.8,298.8 522.2,295.6 523.5,292.0 524.8,288.5 526.1,288.9 527.4,289.5 528.7,290.7 530.0,290.6 531.2,293.9 532.5,296.8 533.8,300.1 535.0,303.4 536.2,307.3 537.6,304.2 539.0,300.6 540.4,298.0 541.8,293.9 543.2,290.5 544.6,287.9 545.9,288.4 547.2,290.2 548.5,290.6 549.8,291.7 551.0,294.6 552.3,297.9 553.5,300.5 554.8,302.5 556.0,305.8 557.4,302.4 558.8,298.9 560.2,295.7 561.6,292.3 563.0,289.5 564.4,286.5 565.6,287.9 566.8,289.0 568.0,290.0 569.2,290.3 570.5,292.1 571.7,292.7 573.1,295.5 574.4,300.2 575.8,303.1 577.2,300.1 578.5,297.7 579.9,295.0 581.2,291.5 582.5,289.6 583.9,286.8 585.2,283.8 586.5,285.8 587.8,286.9 589.1,288.6 590.4,289.6 591.7,292.9 593.0,296.0 594.3,298.5 595.6,302.1 597.0,299.2 598.3,296.5 599.6,293.0 601.0,291.4 602.3,287.5 603.7,284.9 605.0,282.3 606.2,283.3 607.5,285.9 608.8,287.1 610.0,287.7 611.2,289.6 612.8,294.3 614.4,298.4 616.0,302.1 617.3,299.7 618.6,297.1 619.9,294.0 621.2,291.5 622.5,289.0 623.8,286.5 625.0,290.1 626.2,293.1 627.5,296.0 628.8,298.7 630.0,302.1 631.3,304.8 632.6,308.0 633.9,311.0 635.2,314.2 636.5,310.0 637.9,305.4 639.2,301.0 640.6,298.2 641.9,293.3 643.2,289.1 644.6,285.0 645.8,285.8 647.0,286.6 648.2,287.2 649.4,287.8 650.7,287.8 651.9,288.5 653.2,290.8 654.5,294.1 655.8,296.9 657.1,300.0 658.3,298.3 659.5,295.8 660.7,294.0 661.9,291.0 663.2,289.1 664.4,287.5 665.7,290.7 667.0,292.4 668.3,295.6 669.6,297.9 670.8,300.3 672.1,304.3 673.3,307.5 674.6,310.1 675.8,312.9 677.2,309.1 678.5,303.9 679.9,299.8 681.2,296.4 682.5,292.4 683.9,287.4 685.2,283.8 686.5,284.0 687.7,285.8 689.0,285.7 690.2,287.2 691.5,287.5 692.7,290.2 694.0,292.3 695.2,294.7 696.5,296.3 697.7,299.0 699.0,297.4 700.3,295.2 701.6,292.7 702.8,290.8 704.1,289.2 705.4,287.1 706.9,290.9 708.3,293.5 709.8,296.4 711.2,300.0 712.7,303.8 714.2,306.2 715.6,309.5 717.1,312.5 718.3,308.8 719.5,304.5 720.8,300.8 722.0,296.8 723.2,293.2 724.4,289.7 725.7,285.4 726.9,281.9 728.1,282.3 729.4,283.1 730.6,284.4 731.9,284.4 733.1,285.4 734.4,288.1 735.6,289.4 736.9,292.8 738.1,295.2 739.4,296.9 740.6,295.8 741.8,294.8 743.0,294.0 744.2,293.3 745.5,291.3 746.7,290.6 748.0,293.0 749.3,295.8 750.6,298.0 751.9,300.0 753.1,302.1 754.4,304.4 755.6,306.7 756.9,308.7 758.1,311.5 759.5,307.0 760.8,302.4 762.1,298.3 763.5,294.6 764.8,290.8 766.2,285.6 767.5,281.7 768.9,283.6 770.3,285.3 771.7,287.5 773.3,292.7" fill="none" stroke="#000" stroke-width="1" shape-rendering="crispEdges"/><polyline points="95.8,329.6 97.0,334.1 98.1,337.4 99.3,341.1 100.4,343.8 101.5,346.9 102.5,349.0 103.5,351.4 104.6,352.7 105.6,355.2 106.7,358.3 107.7,360.4 108.8,362.8 109.8,365.1 110.8,367.0 111.9,370.4 112.9,372.9 114.0,374.6 115.0,374.9 116.0,376.3 117.1,378.8 118.1,379.7 119.2,381.6 120.2,383.0 121.2,384.4 122.3,383.2 123.3,381.9 124.4,380.5 125.4,379.9 126.5,379.8 127.5,378.1 128.5,374.6 129.6,371.5 130.6,370.2 131.7,367.2 132.7,363.9 133.8,360.3 134.8,358.3 135.8,355.5 136.9,354.5 137.9,351.6 139.0,350.6 140.0,348.9 141.0,344.9 142.1,343.8 143.1,343.0 144.2,341.8 145.2,339.8 146.2,338.4 147.3,337.0 148.3,335.4 149.4,336.9 150.4,338.4 151.5,339.2 152.5,340.4 153.5,342.0 154.6,343.4 155.6,345.8 156.7,346.6 157.7,347.9 158.8,350.8 159.8,350.6 160.8,353.0 161.9,354.2 162.9,359.3 164.0,363.3 165.0,368.8 166.0,371.0 167.1,373.6 168.1,376.3 169.2,378.8 170.2,380.7 171.2,383.6 172.3,385.8 173.3,387.3 174.4,390.6 175.4,389.1 176.5,388.0 177.5,385.7 178.5,383.4 179.6,381.8 180.6,379.7 181.7,378.1 182.7,376.3 183.8,375.7 184.8,372.3 185.8,371.8 186.9,369.2 187.9,369.2 189.0,366.1 190.0,365.2 191.0,362.5 192.1,362.4 193.1,360.8 194.2,358.3 195.2,356.7 196.3,352.8 197.3,349.8 198.3,348.4 199.4,346.0 200.4,343.4 201.5,341.3 202.5,338.9 203.5,335.4 204.6,335.8 205.6,337.8 206.7,338.5 207.7,337.6 208.8,339.2 209.8,337.6 210.8,335.3 211.9,334.4 212.9,336.5 214.0,337.7 215.0,337.7 216.0,339.6 217.1,347.2 218.1,356.2 219.2,358.7 220.2,359.0 221.2,361.0 222.3,363.1 223.3,364.6 224.4,369.0 225.4,374.7 226.5,379.5 227.5,383.3 228.5,383.9 229.6,383.2 230.6,382.2 231.7,381.6 232.7,381.3 233.8,380.8 234.8,377.7 235.8,375.5 236.9,375.2 237.9,371.6 239.0,370.7 240.0,367.7 241.0,366.3 242.1,363.6 243.1,362.0 244.2,360.0 245.2,357.3 246.2,355.1 247.3,353.3 248.3,352.1 249.4,349.8 250.4,346.3 251.5,345.4 252.5,342.3 253.5,338.4 254.6,336.1 255.6,334.5 256.7,330.8 257.7,329.2 258.8,329.3 259.8,330.3 260.8,333.0 261.9,333.9 262.9,334.4 264.0,333.5 265.0,334.8 266.0,333.7 267.1,333.3 268.1,338.9 269.2,343.8 270.2,347.4 271.2,350.1 272.3,352.9 273.3,355.2 274.4,358.3 275.4,359.3 276.5,360.7 277.5,361.9 278.5,365.2 279.6,366.6 280.6,367.8 281.7,368.8 282.7,370.6 283.8,374.7 284.8,377.1 285.8,379.5 286.9,382.3 287.9,380.7 289.0,381.1 290.0,380.0 291.0,378.4 292.1,377.6 293.1,377.1 294.2,374.3 295.2,372.2 296.2,371.1 297.3,367.0 298.3,365.6 299.4,363.9 300.4,362.0 301.5,359.5 302.5,357.0 303.5,354.5 304.6,351.9 305.6,350.6 306.7,347.9 307.7,346.4 308.8,342.8 309.8,341.7 310.8,338.8 311.9,337.4 312.9,334.5 314.0,333.5 315.0,331.7 316.0,329.8 317.1,327.1 318.1,328.5 319.2,329.3 320.2,330.9 321.2,332.3 322.3,336.2 323.3,339.7 324.4,344.5 325.4,347.9 326.5,348.9 327.5,351.4 328.5,352.8 329.6,355.9 330.6,358.1 331.7,359.4 332.7,364.0 333.8,366.9 334.8,371.2 335.8,374.0 336.9,377.8 337.9,381.2 339.0,381.6 340.0,384.0 341.0,385.3 342.1,385.4 343.1,383.2 344.2,381.4 345.2,381.3 346.2,379.3 347.3,377.1 348.3,374.4 349.4,372.7 350.4,369.2 351.5,365.6 352.5,363.3 353.5,360.2 354.6,358.3 355.6,358.7 356.7,358.1 357.7,357.3 358.8,356.1 359.8,356.0 360.8,355.2 361.9,353.0 362.9,351.0 364.0,349.3 365.0,347.7 366.0,345.0 367.1,343.8 368.1,343.4 369.2,341.5 370.2,340.8 371.3,337.9 372.3,337.6 373.3,336.5 374.4,335.0 375.4,332.6 376.5,332.3 377.5,334.7 378.5,336.9 379.6,339.9 380.6,341.4 381.7,343.8 382.7,346.2 383.8,348.1 384.8,350.7 385.8,353.5 386.9,355.0 387.9,357.3 389.0,359.8 390.0,362.5 391.0,365.9 392.1,369.1 393.1,371.9 394.2,374.5 395.2,378.6 396.2,381.2 397.3,386.1 398.3,389.6 399.4,388.3 400.4,386.9 401.5,385.8 402.5,383.8 403.5,382.0 404.6,379.9 405.6,378.1 406.7,377.1 407.7,375.6 408.8,371.8 409.8,370.9 410.8,368.5 411.9,364.5 412.9,363.1 414.0,360.4 415.0,358.2 416.0,356.5 417.1,354.9 418.1,353.5 419.2,351.9 420.2,350.2 421.3,348.3 422.3,348.3 423.3,345.8 424.4,343.0 425.6,341.7 426.7,338.5 427.8,335.1 428.9,334.4 430.0,331.2 431.0,332.7 432.1,333.8 433.1,336.9 434.2,337.5 435.2,340.2 436.2,342.8 437.3,346.4 438.3,350.0 439.4,352.3 440.4,352.6 441.5,354.8 442.5,357.8 443.5,359.3 444.6,360.9 445.6,362.5 446.7,364.7 447.7,367.1 448.8,368.6 449.8,370.5 450.8,372.9 451.9,374.4 452.9,376.0 454.0,376.9 455.0,376.9 456.0,377.5 457.1,378.1 458.1,379.6 459.2,376.5 460.2,373.3 461.2,370.8 462.3,369.5 463.3,368.2 464.4,365.2 465.4,363.8 466.5,362.7 467.5,359.9 468.5,359.6 469.6,357.2 470.6,354.5 471.7,354.5 472.7,352.1 473.8,345.9 474.8,339.6 475.8,339.2 476.9,338.8 477.9,338.1 479.0,336.3 480.0,334.9 481.0,335.8 482.1,334.4 483.1,333.5 484.2,330.1 485.2,328.7 486.2,326.9 487.3,326.1 488.3,324.0 489.4,327.2 490.4,328.0 491.5,330.7 492.5,333.3 493.5,338.2 494.6,341.6 495.6,345.2 496.7,350.0 497.7,353.2 498.8,358.3 499.8,360.8 500.8,361.9 501.9,363.7 502.9,366.5 504.0,367.8 505.0,370.8 506.0,371.1 507.1,373.6 508.1,376.4 509.2,377.9 510.2,379.6 511.2,381.2 512.3,380.1 513.3,377.8 514.4,376.6 515.4,374.5 516.5,373.1 517.5,373.3 518.5,371.3 519.6,369.9 520.6,368.3 521.7,366.7 522.7,363.2 523.8,360.9 524.8,358.5 525.8,356.9 526.9,354.3 527.9,351.7 529.0,349.0 530.0,345.3 531.0,342.7 532.1,341.4 533.1,342.3 534.2,340.0 535.2,340.8 536.2,339.6 537.3,336.7 538.3,335.4 539.4,333.3 540.4,331.2 541.5,327.6 542.5,326.0 543.5,329.2 544.6,332.4 545.6,335.2 546.7,337.5 547.7,339.2 548.8,342.3 549.8,343.7 550.8,345.4 551.9,347.6 552.9,348.9 554.0,351.4 555.0,352.2 556.0,355.1 557.1,357.0 558.1,359.5 559.2,360.4 560.2,362.9 561.3,364.6 562.3,367.4 563.3,369.5 564.4,370.8 565.4,373.5 566.5,375.0 567.5,377.4 568.5,379.6 569.6,377.9 570.6,374.9 571.7,374.6 572.7,371.2 573.8,369.5 574.8,367.8 575.8,365.2 576.9,364.3 577.9,361.8 579.0,361.2 580.0,358.3 581.0,356.1 582.1,353.5 583.1,351.7 584.2,349.6 585.2,346.4 586.2,343.8 587.3,342.0 588.3,340.4 589.4,338.0 590.4,336.3 591.5,333.3 592.6,330.6 593.8,328.9 594.9,327.4 596.0,324.1 597.2,322.4 598.3,320.4 599.5,324.2 600.6,328.1 601.8,332.0 602.9,335.4 604.0,338.7 605.0,339.3 606.0,343.3 607.1,344.9 608.1,347.4 609.2,349.1 610.2,351.8 611.2,354.2 612.3,356.5 613.3,359.2 614.4,363.7 615.4,366.3 616.5,368.2 617.5,371.9 618.6,372.3 619.7,374.0 620.8,376.0 621.9,376.4 623.1,377.7 624.2,378.8 625.3,376.4 626.5,374.8 627.6,372.1 628.8,368.8 629.9,366.3 631.0,364.6 632.1,361.5 633.1,358.5 634.2,354.1 635.2,351.1 636.2,348.6 637.3,344.9 638.3,341.7 639.4,340.0 640.4,339.0 641.5,337.6 642.5,337.5 643.5,335.5 644.6,333.2 645.6,332.3 646.7,331.2 647.7,329.7 648.8,326.6 649.8,324.8 650.8,324.3 651.9,323.0 652.9,320.8 654.0,318.3 655.0,319.7 656.0,322.6 657.1,325.3 658.1,326.3 659.2,329.2 660.2,331.5 661.2,334.7 662.3,337.0 663.3,339.8 664.4,343.8 665.4,346.0 666.5,349.8 667.5,352.1 668.5,355.1 669.6,358.7 670.6,360.4 671.7,363.4 672.7,366.7 673.8,366.8 674.8,367.0 675.8,368.1 676.9,368.9 677.9,369.8 679.0,369.2 680.0,368.2 681.0,368.9 682.1,368.0 683.1,366.7 684.2,364.6 685.2,362.5 686.2,361.3 687.3,358.8 688.3,357.1 689.4,356.4 690.4,354.2 691.5,351.1 692.5,350.4 693.5,346.3 694.6,345.8 695.6,342.2 696.7,340.2 697.7,337.6 698.8,335.4 699.8,334.5 700.8,333.1 701.9,331.5 702.9,330.3 704.0,330.9 705.0,329.1 706.0,328.7 707.1,326.2 708.1,326.0 709.2,326.7 710.2,327.4 711.2,327.7 712.3,327.9 713.3,329.6 714.4,330.3 715.4,331.4 716.5,331.2 717.5,332.5 718.5,334.5 719.6,337.8 720.6,339.8 721.7,341.0 722.7,344.1 723.8,346.6 724.8,347.8 725.8,350.0 726.9,351.7 727.9,355.8 729.0,356.4 730.0,360.6 731.0,361.6 732.1,364.5 733.1,367.7 734.2,369.8 735.2,369.7 736.3,367.6 737.3,366.5 738.3,365.7 739.4,366.0 740.4,365.3 741.5,365.2 742.5,363.5 743.5,362.8 744.6,362.6 745.6,361.7 746.7,360.4 747.7,356.9 748.8,354.1 749.8,350.2 750.8,346.1 751.9,344.0 752.9,340.5 754.0,337.9 755.0,333.9 756.0,330.2 757.1,328.0 758.1,327.7 759.2,325.7 760.2,323.3 761.2,322.5 762.3,321.9 763.3,319.8 764.4,317.9 765.4,315.5 766.5,315.0 767.5,318.4 768.5,322.0 769.6,324.8 770.6,327.1 772.0,331.2 773.3,336.5" fill="none" stroke="#1078d0" stroke-width="1" shape-rendering="crispEdges"/><polyline points="95.0,548.5 96.0,549.8 97.0,548.3 98.0,548.0 99.0,547.1 100.0,547.7 101.0,547.7 102.0,549.8 103.0,547.1 104.0,548.8 105.0,547.1 106.0,547.7 107.0,548.0 108.0,548.0 109.0,547.7 110.0,548.8 111.0,547.7 112.0,548.0 113.0,547.1 114.0,547.7 115.0,548.8 116.0,547.1 117.0,548.0 118.0,547.1 119.0,548.8 120.0,547.1 121.0,548.3 122.0,549.3 123.0,548.0 124.0,548.3 125.0,547.7 126.0,549.3 127.0,548.3 128.0,547.7 129.0,548.8 130.0,549.8 131.0,547.7 132.0,547.7 133.0,547.1 134.0,548.8 135.0,549.5 136.0,548.0 137.0,549.8 138.0,549.5 139.0,549.5 140.0,549.8 141.0,549.3 142.0,548.8 143.0,548.3 144.0,548.8 145.0,547.7 146.0,549.3 147.0,549.5 148.0,549.8 149.0,549.5 150.0,549.3 151.0,547.7 152.0,547.7 153.0,548.0 154.0,548.3 155.0,549.8 156.0,548.3 157.0,549.5 158.0,548.0 159.0,547.1 160.0,547.7 161.0,549.8 162.0,549.8 163.0,549.8 164.0,549.5 165.0,549.5 166.0,547.7 167.0,547.7 168.0,549.3 169.0,549.5 170.0,547.7 171.0,547.1 172.0,549.3 173.0,549.5 174.0,549.3 175.0,548.0 176.0,549.8 177.0,547.1 178.0,549.5 179.0,549.8 180.0,548.3 181.0,547.7 182.0,549.5 183.0,547.1 184.0,548.8 185.0,549.3 186.0,548.3 187.0,548.8 188.0,548.0 189.0,548.0 190.0,549.5 191.0,547.7 192.0,548.3 193.0,549.5 194.0,548.0 195.0,549.3 196.0,548.3 197.0,548.0 198.0,549.3 199.0,548.0 200.0,549.8 201.0,548.0 202.0,548.8 203.0,548.3 204.0,547.7 205.0,548.3 206.0,548.3 207.0,548.8 208.0,548.8 209.0,547.1 210.0,549.5 211.0,548.3 212.0,549.3 213.0,549.3 214.0,547.1 215.0,548.3 216.0,548.0 217.0,549.8 218.0,549.8 219.0,548.3 220.0,547.1 221.0,549.5 222.0,548.0 223.0,548.0 224.0,548.0 225.0,548.0 226.0,547.7 227.0,549.5 228.0,548.0 229.0,547.1 230.0,548.8 231.0,547.7 232.0,548.8 233.0,549.5 234.0,548.3 235.0,547.7 236.0,549.8 237.0,547.1 238.0,547.7 239.0,547.1 240.0,548.3 241.0,547.7 242.0,549.8 243.0,547.1 244.0,547.7 245.0,548.8 246.0,548.0 247.0,548.3 248.0,549.3 249.0,549.8 250.0,549.8 251.0,549.5 252.0,547.7 253.0,547.7 254.0,549.5 255.0,549.5 256.0,549.5 257.0,549.5 258.0,549.3 259.0,547.7 260.0,548.3 261.0,547.7 262.0,549.8 263.0,549.3 264.0,549.5 265.0,548.3 266.0,547.1 267.0,548.8 268.0,549.8 269.0,548.3 270.0,547.1 271.0,549.3 272.0,547.7 273.0,549.3 274.0,549.8 275.0,548.3 276.0,549.8 277.0,548.8 278.0,549.8 279.0,548.8 280.0,548.8 281.0,548.8 282.0,548.0 283.0,548.8 284.0,548.8 285.0,549.5 286.0,549.8 287.0,547.1 288.0,547.1 289.0,549.3 290.0,549.5 291.0,549.3 292.0,548.8 293.0,549.8 294.0,549.5 295.0,549.8 296.0,549.8 297.0,547.7 298.0,548.8 299.0,547.7 300.0,548.8 301.0,549.5 302.0,548.8 303.0,549.8 304.0,548.8 305.0,549.5 306.0,547.1 307.0,549.5 308.0,549.8 309.0,547.7 310.0,547.7 311.0,548.0 312.0,548.8 313.0,549.5 314.0,548.3 315.0,548.0 316.0,549.8 317.0,547.7 318.0,548.0 319.0,549.5 320.0,548.0 321.0,547.7 322.0,548.3 323.0,548.3 324.0,548.3 325.0,547.1 326.0,548.3 327.0,549.5 328.0,548.3 329.0,549.5 330.0,549.8 331.0,548.3 332.0,548.3 333.0,547.1 334.0,547.1 335.0,547.7 336.0,548.3 337.0,548.0 338.0,548.8 339.0,548.8 340.0,547.1 341.0,549.3 342.0,548.8 343.0,549.3 344.0,548.8 345.0,549.8 346.0,549.3 347.0,548.0 348.0,548.3 349.0,547.1 350.0,549.8 351.0,549.5 352.0,548.0 353.0,548.3 354.0,548.3 355.0,547.1 356.0,549.5 357.0,548.3 358.0,547.1 359.0,548.3 360.0,548.3 361.0,548.3 362.0,549.5 363.0,547.7 364.0,547.1 365.0,549.8 366.0,549.5 367.0,547.7 368.0,547.1 369.0,550.8 370.0,553.8 371.0,558.3 372.0,557.1 373.0,554.7 374.0,553.5 375.0,549.1 376.0,548.7 377.0,549.5 378.0,549.8 379.0,548.8 380.0,549.3 381.0,549.2 382.0,549.2 383.0,548.5 384.0,549.0 385.0,548.5 386.0,549.2 387.0,548.0 388.0,547.7 389.0,547.4 390.0,547.7 391.0,549.2 392.0,549.5 393.0,547.4 394.0,548.5 395.0,547.7 396.0,547.4 397.0,548.5 398.0,549.0 399.0,547.4 400.0,548.0 401.0,549.5 402.0,548.0 403.0,549.0 404.0,548.0 405.0,549.2 406.0,548.5 407.0,547.4 408.0,547.7 409.0,549.2 410.0,548.0 411.0,548.5 412.0,548.0 413.0,547.7 414.0,547.7 415.0,549.5 416.0,547.7 417.0,548.5 418.0,549.5 419.0,549.5 420.0,547.4 421.0,549.5 422.0,546.8 423.0,549.5 424.0,549.2 425.0,549.2 426.0,546.8 427.0,547.7 428.0,549.5 429.0,549.0 430.0,547.4 431.0,547.4 432.0,548.5 433.0,547.4 434.0,547.4 435.0,549.0 436.0,549.0 437.0,546.8 438.0,548.0 439.0,549.0 440.0,548.0 441.0,547.7 442.0,549.0 443.0,547.7 444.0,548.0 445.0,549.2 446.0,549.5 447.0,547.4 448.0,549.0 449.0,546.8 450.0,548.0 451.0,547.7 452.0,547.4 453.0,549.0 454.0,546.8 455.0,547.4 456.0,547.0 457.0,542.4 458.0,537.5 459.0,535.4 460.0,544.0 461.0,544.4 462.0,546.2 463.0,542.8 464.0,541.5 465.0,533.7 466.0,533.0 467.0,538.0 468.0,541.8 469.0,546.5 470.0,546.4 471.0,548.0 472.0,549.0 473.0,546.8 474.0,548.0 475.0,548.5 476.0,549.0 477.0,549.0 478.0,548.5 479.0,549.0 480.0,549.2 481.0,548.5 482.0,549.5 483.0,550.0 484.0,547.3 485.0,549.5 486.0,547.3 487.0,547.3 488.0,547.3 489.0,549.0 490.0,549.7 491.0,549.0 492.0,549.7 493.0,547.9 494.0,548.2 495.0,549.7 496.0,548.2 497.0,549.5 498.0,549.0 499.0,549.0 500.0,550.0 501.0,549.0 502.0,548.5 503.0,548.2 504.0,550.0 505.0,547.3 506.0,548.5 507.0,547.3 508.0,547.9 509.0,549.5 510.0,548.2 511.0,548.5 512.0,547.3 513.0,547.9 514.0,548.2 515.0,549.5 516.0,549.0 517.0,549.5 518.0,547.3 519.0,549.7 520.0,548.5 521.0,548.5 522.0,549.5 523.0,549.7 524.0,547.3 525.0,549.5 526.0,550.0 527.0,550.0 528.0,550.0 529.0,549.0 530.0,547.3 531.0,549.5 532.0,549.0 533.0,550.0 534.0,548.5 535.0,547.3 536.0,550.0 537.0,548.2 538.0,547.9 539.0,549.7 540.0,549.5 541.0,549.0 542.0,549.0 543.0,547.3 544.0,547.9 545.0,549.5 546.0,547.9 547.0,548.5 548.0,548.2 549.0,547.3 550.0,548.2 551.0,547.3 552.0,549.5 553.0,549.5 554.0,549.0 555.0,547.9 556.0,548.5 557.0,548.2 558.0,550.0 559.0,549.7 560.0,548.5 561.0,549.5 562.0,548.5 563.0,547.3 564.0,548.2 565.0,548.5 566.0,547.3 567.0,549.0 568.0,547.9 569.0,547.3 570.0,547.3 571.0,548.5 572.0,550.0 573.0,547.9 574.0,548.2 575.0,549.7 576.0,547.3 577.0,547.3 578.0,549.0 579.0,549.7 580.0,549.5 581.0,547.3 582.0,549.7 583.0,547.9 584.0,547.9 585.0,547.9 586.0,549.7 587.0,549.5 588.0,547.9 589.0,549.5 590.0,549.0 591.0,549.0 592.0,549.0 593.0,549.7 594.0,549.7 595.0,548.2 596.0,547.9 597.0,549.7 598.0,549.5 599.0,547.3 600.0,549.0 601.0,548.9 602.0,549.5 603.0,551.0 604.0,550.5 605.0,550.5 606.0,549.5 607.0,548.3 608.0,550.7 609.0,548.3 610.0,550.7 611.0,550.5 612.0,548.9 613.0,550.0 614.0,550.7 615.0,550.5 616.0,550.5 617.0,550.7 618.0,550.7 619.0,550.7 620.0,548.9 621.0,550.0 622.0,550.5 623.0,548.9 624.0,550.7 625.0,548.3 626.0,550.5 627.0,550.7 628.0,548.9 629.0,550.7 630.0,550.5 631.0,549.2 632.0,550.0 633.0,550.0 634.0,548.9 635.0,548.9 636.0,549.5 637.0,550.5 638.0,551.0 639.0,549.5 640.0,550.5 641.0,548.9 642.0,551.0 643.0,550.0 644.0,550.7 645.0,550.7 646.0,549.2 647.0,548.3 648.0,549.5 649.0,548.3 650.0,550.7 651.0,552.2 652.0,550.7 653.0,552.0 654.0,551.0 655.0,550.7 656.0,552.5 657.0,550.7 658.0,552.5 659.0,550.4 660.0,552.5 661.0,549.8 662.0,552.5 663.0,552.5 664.0,550.7 665.0,550.4 666.0,551.5 667.0,549.8 668.0,552.0 669.0,552.0 670.0,552.5 671.0,550.4 672.0,550.7 673.0,550.7 674.0,550.4 675.0,552.5 676.0,550.7 677.0,552.0 678.0,549.8 679.0,552.0 680.0,550.4 681.0,549.8 682.0,552.0 683.0,551.0 684.0,551.5 685.0,552.0 686.0,550.7 687.0,552.5 688.0,551.5 689.0,552.5 690.0,550.7 691.0,549.8 692.0,550.7 693.0,551.5 694.0,550.4 695.0,549.8 696.0,550.7 697.0,552.2 698.0,551.0 699.0,552.0 700.0,552.2 701.0,551.3 702.0,552.5 703.0,552.5 704.0,553.7 705.0,552.2 706.0,554.0 707.0,553.5 708.0,553.5 709.0,553.5 710.0,553.5 711.0,552.2 712.0,553.0 713.0,553.5 714.0,553.7 715.0,552.2 716.0,551.9 717.0,552.5 718.0,552.5 719.0,551.9 720.0,553.0 721.0,553.7 722.0,553.0 723.0,553.7 724.0,554.0 725.0,553.7 726.0,552.2 727.0,552.5 728.0,553.0 729.0,553.0 730.0,551.9 731.0,552.5 732.0,554.0 733.0,551.9 734.0,554.0 735.0,553.0 736.0,554.0 737.0,553.5 738.0,553.0 739.0,551.3 740.0,552.2 741.0,552.2 742.0,552.2 743.0,553.0 744.0,552.2 745.0,553.5 746.0,554.0 747.0,551.3 748.0,553.7 749.0,553.5 750.0,554.0 751.0,552.5 752.0,553.0 753.0,551.9 754.0,553.5 755.0,553.0 756.0,552.2 757.0,552.2 758.0,553.7 759.0,552.2 760.0,553.5 761.0,551.3 762.0,552.5 763.0,551.3 764.0,552.2 765.0,553.7 766.0,553.7 767.0,551.3 768.0,551.9 769.0,552.2 770.0,553.7 771.0,553.7 772.0,553.0 773.0,551.9" fill="none" stroke="#d01414" stroke-width="2" shape-rendering="crispEdges"/></svg>
<div class="a rais1" style="left:23px;top:934px;width:839px;height:39px"></div>
<div class="a btn" style="left:31px;top:941px;width:81px;height:25px"></div>
<div class="a ui" style="left:38px;top:945px;font-size:15px;line-height:16px;transform-origin:0 0;transform:scaleX(0.681)">アラームリセット</div>
<div class="a sunk" style="left:119px;top:941px;width:733px;height:25px;background:#fff"></div>
<div class="a btn" style="left:835px;top:943px;width:16px;height:21px"><svg width="16" height="21"><path d="M4.5 9h7l-3.5 4z" fill="#000"/></svg></div>
<div class="a sunk1" style="left:15px;top:988px;width:150px;height:19px"></div>
<div class="a sunk1" style="left:167px;top:988px;width:703px;height:19px"></div>
<div class="a ui" style="left:17px;top:990px;letter-spacing:0.66px">保存ウェイト！！</div>
<svg class="a" style="left:856px;top:993px" width="13" height="13"><path d="M12 1L1 12M12 5L5 12M12 9L9 12" stroke="#808080" stroke-width="1.6"/><path d="M12 0L0 12M12 4L4 12M12 8L8 12" stroke="#fff" stroke-width="1"/></svg>
<!-- s_taskbar -->
<div class="a" style="left:0;top:1020px;width:1680px;height:30px;background:#d4d0c8;box-shadow:inset 0 1px #d4d0c8,inset 0 2px #fff"></div>
<div class="a btn" style="left:2px;top:1024px;width:62px;height:22px"></div>
<svg class="a" style="left:5px;top:1026px" width="16" height="17" viewBox="0 0 16 17"><path d="M5 3q3-2 5 0l-1 5q-2-2-5 0z" fill="#e85020"/><path d="M10.500 3.500q2 1.500 5-0.500l-1 5q-3 2-5 0z" fill="#40a040"/><path d="M3.800 8.800q3-2 5 0l-1 5q-2-2-5 0z" fill="#3060d0"/><path d="M9.300 9.300q2 1.500 5-0.500l-1 5q-3 2-5 0z" fill="#f0c020"/><path d="M1 5l2 .5M0.500 8l2 .5M0 11l2 .5" stroke="#404040" stroke-width="1"/></svg>
<div class="a ui" style="left:22px;top:1028px;font-weight:bold;letter-spacing:-0.81px">スタート</div>
<svg class="a" style="left:71px;top:1026px" width="18" height="18" viewBox="0 0 18 18"><ellipse cx="9" cy="9" rx="8.500" ry="3.500" transform="rotate(-35 9 9)" fill="none" stroke="#5ab4f4" stroke-width="1.300"/><path d="M5 10h9q0-5.500-4.500-5.500t-4.800 5.300q.300 5.200 4.800 5.200q3 0 4.200-2.500" fill="none" stroke="#1b74e0" stroke-width="2.800"/></svg>
<svg class="a" style="left:94px;top:1027px" width="17" height="17" viewBox="0 0 17 17"><rect x="1.500" y="2.500" width="13" height="13" rx="3" fill="#60a8f0" stroke="#2060c0"/><rect x="4" y="5" width="7" height="8" fill="#fff" stroke="#3070c0" stroke-width=".8"/><path d="M6 11l6-7" stroke="#d06020" stroke-width="1.500"/><path d="M5.500 7h3M5.500 9h2" stroke="#3070c0" stroke-width=".8"/></svg>
<svg class="a" style="left:117px;top:1027px" width="18" height="17" viewBox="0 0 18 17"><path d="M1 4h5l2 2h7v8h-14z" fill="#f0d070" stroke="#b08820"/><path d="M3 8h14l-2 6h-14z" fill="#f8e8a0" stroke="#b08820"/><circle cx="8" cy="8" r="3" fill="#d0e8ff" stroke="#7090b0"/></svg>
<div class="a btn" style="left:142px;top:1024px;width:160px;height:22px"></div>
<svg class="a" style="left:146px;top:1027px" width="16" height="16"><rect x="0" y="1" width="16" height="13" fill="#000" stroke="#c0c0c0"/><rect x="0.500" y="1.500" width="15" height="2.500" fill="#000080"/><text x="2" y="11.500" font-family="Liberation Sans,sans-serif" font-size="7" font-weight="bold" fill="#fff">C:\</text></svg>
<div class="a ui" style="left:166px;top:1028px;letter-spacing:-0.65px">transfile.cmd へのショート...</div>
<div class="a btn" style="left:305px;top:1024px;width:160px;height:22px"></div>
<svg class="a" style="left:308px;top:1026px" width="18" height="18" viewBox="0 0 18 18"><path d="M4 4h12v10h-12z" fill="#c8d0d8" stroke="#404040"/><path d="M6 1h10v3h-10z" fill="#e0c040" stroke="#605020" stroke-width=".6"/><path d="M1 3l6 12 3-2-5-11z" fill="#d04050" stroke="#601020" stroke-width=".6"/><path d="M2 15q4-3 8 0q-4 3-8 0z" fill="#f0a0a0" stroke="#802020" stroke-width=".6"/><path d="M8 6h7v6h-7z" fill="#6080b0"/></svg>
<div class="a ui" style="left:329px;top:1028px;letter-spacing:-0.48px">PhotoImpression 2000</div>
<div class="a" style="left:468px;top:1024px;width:160px;height:22px;background:#fff;background-image:repeating-conic-gradient(#d4d0c8 0 25%,#fff 0 50%);background-size:2px 2px;box-shadow:inset 1px 1px #404040,inset -1px -1px #fff,inset 2px 2px #808080,inset -2px -2px #d4d0c8"></div>
<svg class="a" style="left:473px;top:1028px" width="16" height="16" viewBox="0 0 16 16"><rect x="0" y="0" width="16" height="16" fill="#1c1c28"/><rect x="1.500" y="1" width="13.500" height="6.500" fill="#fff"/><path d="M1.500 3.200h4.500l3-1.500h2.500l3.500 2.500" stroke="#9a70d0" stroke-width="1" fill="none"/><path d="M1.500 4.800h5l2.500-.6h3l3 .8" stroke="#e080b0" stroke-width="1" fill="none"/><rect x="1.500" y="5.800" width="13.500" height="1.800" fill="#58b058"/><path d="M2 5.800h5" stroke="#d8d060" stroke-width="1"/><circle cx="12.300" cy="3.300" r="1" fill="#401040"/><path d="M2 8.700h13" stroke="#c8c8d0" stroke-width="1" stroke-dasharray="2.500 .8"/><rect x="2" y="10" width="13" height="5" fill="#fff"/><rect x="3.500" y="10.600" width="2.700" height="4.400" fill="#e01010"/><rect x="7.500" y="10.600" width="2.700" height="4.400" fill="#0808d0"/><rect x="11.300" y="10.300" width="3" height="4.700" fill="#10e010"/></svg>
<div class="a ui" style="left:493px;top:1029px;font-weight:bold;letter-spacing:0.09px">ソフトサーモ&nbsp; E830</div>
<svg class="a" style="left:1546px;top:1029px" width="15" height="14" viewBox="0 0 15 14"><path d="M7 0v3" stroke="#000"/><rect x="1.500" y="3.500" width="12" height="9" fill="#fff" stroke="#000"/><path d="M3 6h9M3 8h9M4 10.500h7" stroke="#000" stroke-dasharray="1 1"/></svg>
<div class="a sunk1" style="left:1564px;top:1024px;width:113px;height:23px"></div>
<svg class="a" style="left:1567px;top:1027px" width="17" height="17" viewBox="0 0 17 17"><path d="M8.500 1q3 2 6.500 2q0 9-6.500 13q-6.500-4-6.500-13q3.500 0 6.500-2z" fill="#f0d020" stroke="#806000"/><path d="M8.500 5v5" stroke="#000" stroke-width="2"/><circle cx="8.500" cy="12.500" r="1.200" fill="#000"/></svg>
<svg class="a" style="left:1584px;top:1027px" width="17" height="17" viewBox="0 0 17 17"><path d="M8.500 1q3 2 6.500 2q0 9-6.500 13q-6.500-4-6.500-13q3.500 0 6.500-2z" fill="#d82020" stroke="#700000"/><circle cx="8.500" cy="8" r="3.500" fill="#fff"/><path d="M6.500 6l4 4M10.500 6l-4 4" stroke="#d82020" stroke-width="1.400"/></svg>
<svg class="a" style="left:1602px;top:1027px" width="17" height="17" viewBox="0 0 17 17"><path d="M2 3h6v6h-6z" fill="#30a030" stroke="#106010"/><path d="M5 9l9 3-2 3-9-3z" fill="#b0b0b0" stroke="#505050"/><path d="M9 2l5 5" stroke="#30a030" stroke-width="2"/><path d="M12 2l3 0 0 3z" fill="#30a030"/></svg>
<svg class="a" style="left:1622px;top:1030px" width="13" height="13" viewBox="0 0 15 15"><path d="M7.500 1l2 4.500 5 .5-3.700 3.300 1 4.700-4.300-2.500-4.300 2.500 1-4.700-3.700-3.300 5-.5z" fill="#f8d830" stroke="#a08000" stroke-width=".8"/></svg>
<div class="a ui" style="left:1643px;top:1029px;letter-spacing:-0.51px">22:50</div>
</body></html>
